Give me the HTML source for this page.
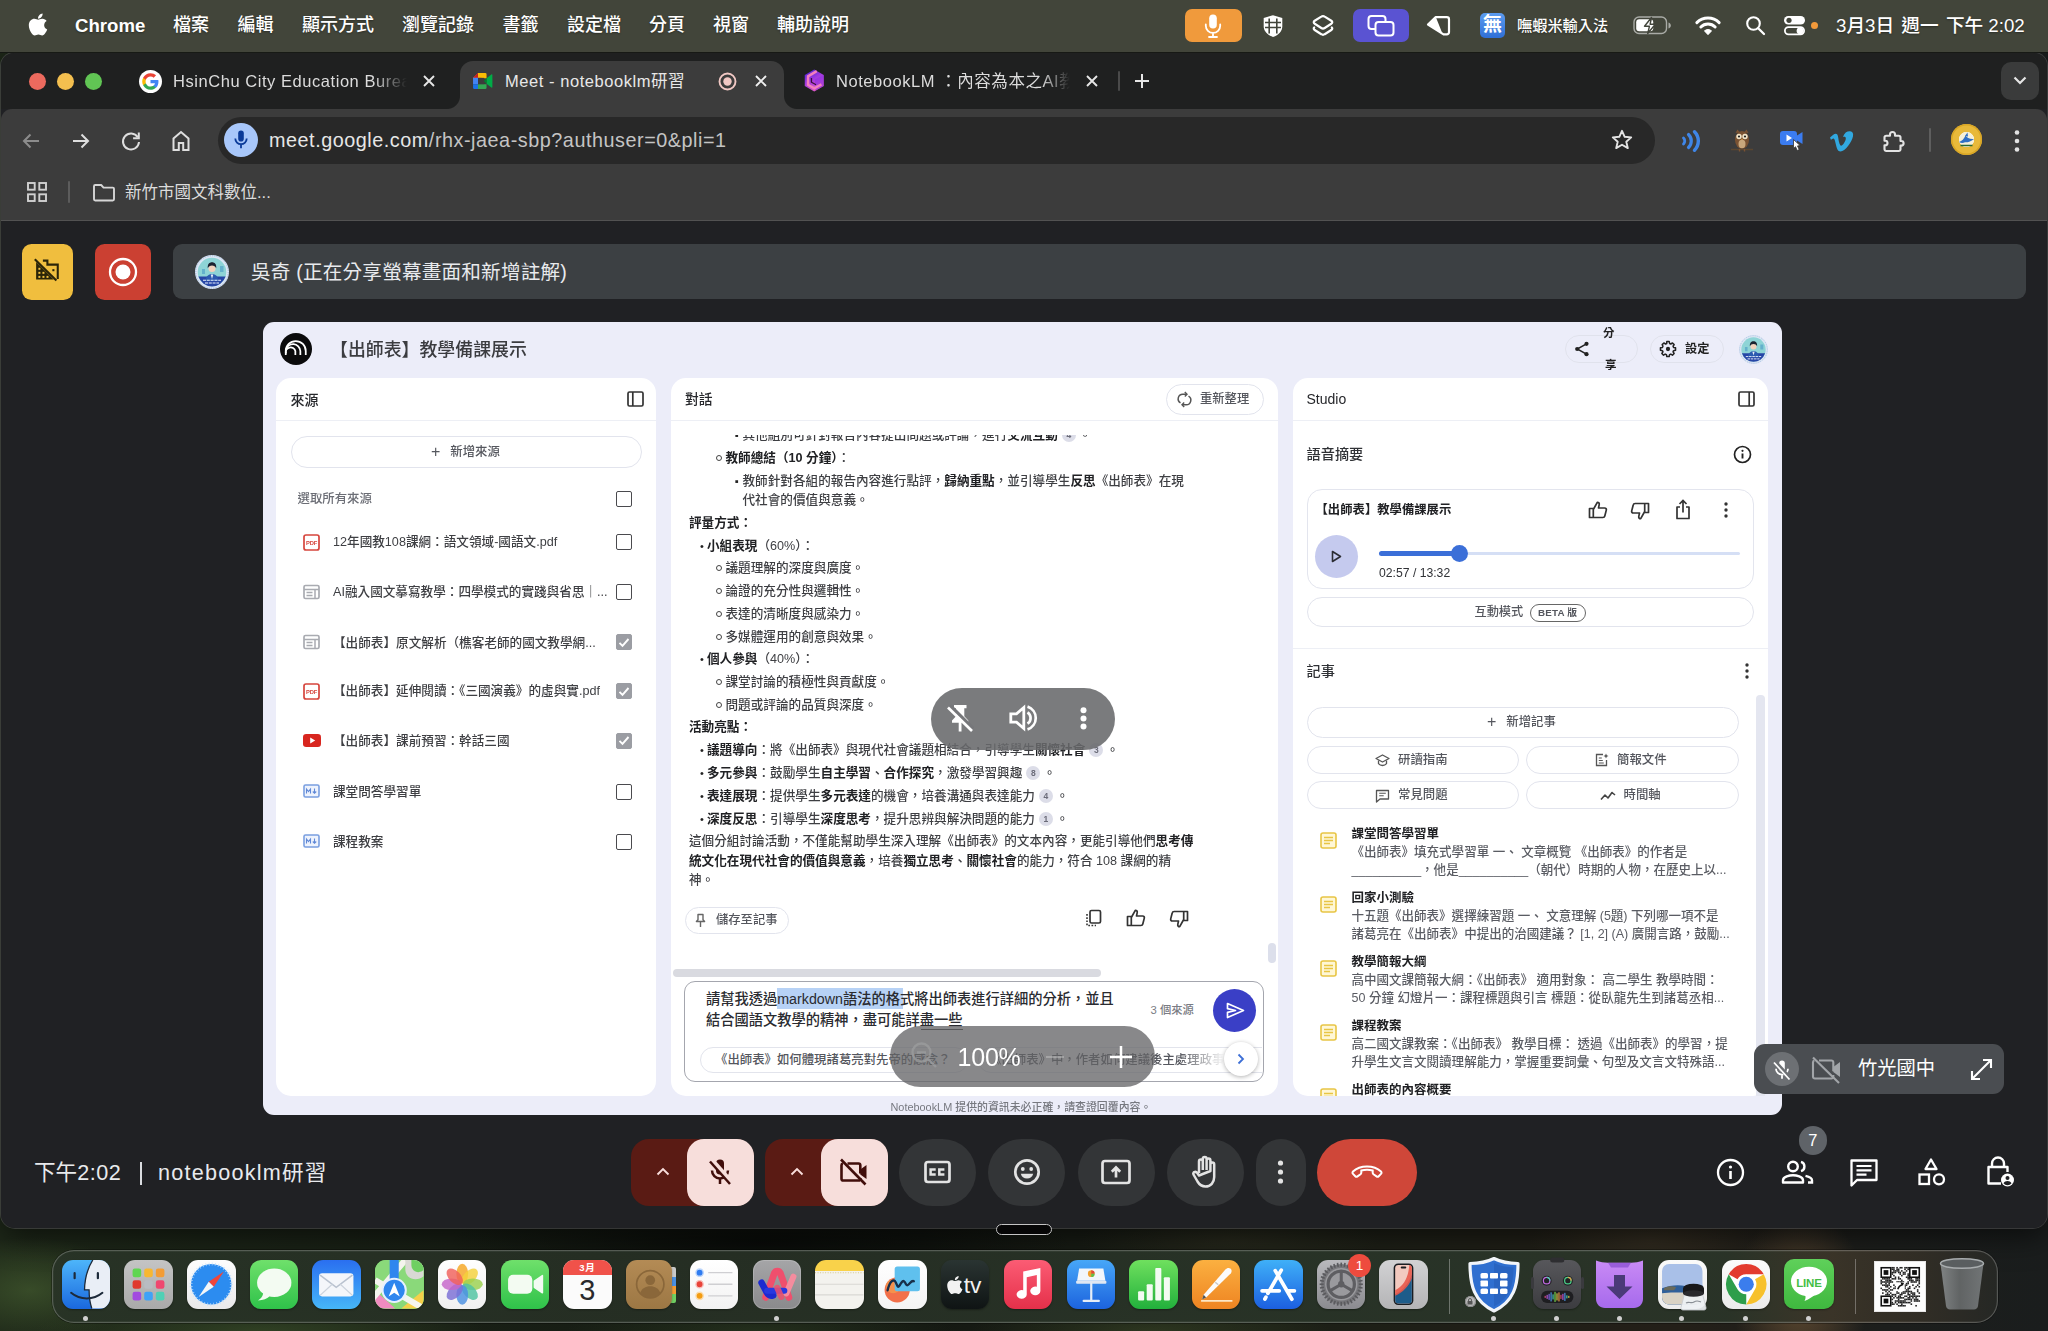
<!DOCTYPE html>
<html lang="zh-Hant">
<head>
<meta charset="utf-8">
<title>Meet - notebooklm研習</title>
<style>
*{box-sizing:border-box;margin:0;padding:0}
html,body{width:2048px;height:1331px;overflow:hidden;background:#1c2018}
body{position:relative;font-family:"Liberation Sans","Noto Sans CJK TC",sans-serif;color:#fff;-webkit-font-smoothing:antialiased}
.abs{position:absolute}
svg{display:block;overflow:visible}
/* wallpaper */
#wall{left:0;top:0;width:2048px;height:1331px;background:
 radial-gradient(ellipse 90px 120px at 1800px 1300px,rgba(110,84,54,.8),transparent 75%),
 radial-gradient(ellipse 160px 60px at 1650px 1240px,rgba(64,56,40,.5),transparent 75%),
 radial-gradient(ellipse 200px 40px at 1230px 1240px,rgba(54,52,36,.45),transparent 75%),
 radial-gradient(ellipse 140px 70px at 30px 1290px,rgba(62,84,44,.8),transparent 75%),
 radial-gradient(ellipse 300px 40px at 260px 1331px,rgba(56,76,40,.7),transparent 75%),
 radial-gradient(ellipse 260px 36px at 760px 1331px,rgba(44,60,34,.6),transparent 75%),
 radial-gradient(ellipse 240px 40px at 1150px 1331px,rgba(60,74,40,.55),transparent 75%),
 radial-gradient(ellipse 420px 50px at 760px 1242px,rgba(8,10,8,.9),transparent 75%),
 linear-gradient(90deg,#1e2819 0%,#181f15 22%,#141812 45%,#1b1f16 62%,#231f18 82%,#1c1e1c 92%,#1a1d1d 100%)}
/* menubar */
#menubar{left:0;top:0;width:2048px;height:51.500px;background:#42453a;z-index:5;box-shadow:0 1px 0 rgba(20,22,18,.9)}
#menubar .mi{position:absolute;top:0;height:52px;line-height:51.500px;font-size:18px;color:#fff;white-space:nowrap;font-weight:500;text-shadow:0 1px 2px rgba(0,0,0,.35)}
/* chrome window */
#win{left:1px;top:53px;width:2046px;height:1175px;border-radius:13px 13px 14px 14px;background:#202124;overflow:hidden;box-shadow:0 0 0 1px rgba(90,90,90,.55),0 8px 30px rgba(0,0,0,.6)}
#tabstrip{left:0;top:0;width:2046px;height:56px;background:#1f2020}
#toolbar{left:0;top:55.500px;width:2046px;height:112.500px;background:#3c3c3c;border-bottom:1px solid #525252;border-radius:11px 11px 0 0}
.tabtitle{position:absolute;top:16px;letter-spacing:.55px;font-size:16.5px;line-height:24px;color:#dcdcdc;white-space:nowrap;overflow:hidden}
#url{left:217px;top:63.500px;width:1437px;height:47.500px;border-radius:24px;background:#282828}
/* meet */
#meet{left:0;top:168px;width:2046px;height:1007px;background:#202124}

.av{border-radius:50%;background:radial-gradient(circle at 50% 38%,#2b3f66 0 14%,transparent 15%),radial-gradient(circle at 50% 62%,#3d78b8 0 22%,transparent 23%),radial-gradient(circle at 50% 50%,#9fdad6 0 48%,#5a8fd0 49% 60%,#dfe9f6 61% 100%);box-shadow:inset 0 -9px 0 -2px #2a4fa8}
/* notebooklm */
#nb{color:#303236;filter:blur(.35px)}
.panel{position:absolute;background:#fff;border-radius:15px}
.hr{position:absolute;height:1.300px;background:#edeff5}
.t{position:absolute;white-space:nowrap;font-size:12.620px;line-height:18px;color:#3e3f43;font-weight:500}
.t b{font-weight:700;color:#202124}
.pill{position:absolute;border:1.200px solid #e2e4ed;border-radius:99px;background:#fff}
.cb{position:absolute;width:16px;height:16px;border:1.600px solid #4a4a4e;border-radius:2px;background:#fff}
.cb.on{border-color:#9b9da3;background:#9b9da3}
.cit{display:inline-block;width:14px;height:14px;border-radius:50%;background:#dcdde8;color:#6a6b78;font-size:8.500px;line-height:14px;text-align:center;vertical-align:1px;margin:0 3px 0 4px;font-weight:700}

.bu{display:inline-block;width:7.500px;font-size:11px;vertical-align:0px;color:#222}
.dot{display:inline-block;width:7px;font-size:11px;color:#222}
.ci{display:inline-block;width:6px;height:6px;border:1.100px solid #444;border-radius:50%;margin:0 3.500px 1px 1px}

.nt{font-size:12.500px}
.nd{font-size:12.520px;color:#5a5c63}

.gb{top:1139px;height:66.500px;border-radius:33.500px;background:#333537}

.dk{overflow:hidden;box-shadow:0 1px 2px rgba(0,0,0,.35)}
</style>
</head>
<body>
<svg width="0" height="0" style="position:absolute"><defs>
<symbol id="avt" viewBox="-17 -17 34 34"><circle r="17" fill="#dde7f4"/><circle r="16.200" fill="none" stroke="#7f9fd0" stroke-width=".7" stroke-dasharray="1 1.300"/><circle r="14.300" fill="#8ed4d6"/><path d="M-13.600 4.500A14.300 14.300 0 0 0 13.600 4.500z" fill="#2746a6"/><path d="M-10 -3h3v5h-3zM8 -6h3.500v6H8z" fill="#5aa7c9" opacity=".8"/><path d="M-6.500 9c.5-5 3-7 6.500-7s6 2 6.500 7z" fill="#2c5bb0"/><path d="M-1.300 2.500h2.600L0 7z" fill="#e9eef6"/><circle cy="-3.600" r="3.500" fill="#f1d2bd"/><path d="M-4.200 -3.800c-.5-4 1.500-6 4.200-6s4.700 2 4.200 6c-1-1.800-2-2.600-4.200-2.600s-3.200.8-4.200 2.600z" fill="#1b2230"/><path d="M-9 8.300h18M-7 11h14" stroke="#e6eefc" stroke-width="1.100" stroke-dasharray="3 .8"/></symbol>
</defs></svg>
<div id="wall" class="abs"></div>

<!-- ================= MENU BAR ================= -->
<div id="menubar" class="abs">
 <svg class="abs" style="left:28px;top:12px" width="20" height="25" viewBox="0 0 384 512"><path fill="#fff" d="M318.7 268.7c-.2-36.7 16.4-64.4 50-84.8-18.8-26.9-47.2-41.7-84.7-44.6-35.5-2.8-74.3 20.7-88.5 20.7-15 0-49.4-19.7-76.4-19.7C63.3 141.2 4 184.8 4 273.5q0 39.3 14.4 81.2c12.8 36.7 59 126.7 107.2 125.2 25.2-.6 43-17.9 75.8-17.9 31.8 0 48.3 17.9 76.4 17.9 48.6-.7 90.4-82.5 102.6-119.3-65.2-30.7-61.7-90-61.7-91.9zm-56.6-164.2c27.3-32.4 24.8-61.9 24-72.5-24.1 1.4-52 16.4-67.9 34.9-17.5 19.8-27.8 44.3-25.6 71.9 26.1 2 49.9-11.4 69.5-34.3z"/></svg>
 <div class="mi" style="left:75px;font-weight:700;font-size:18.6px">Chrome</div>
 <div class="mi" style="left:173px">檔案</div>
 <div class="mi" style="left:237.5px">編輯</div>
 <div class="mi" style="left:302px">顯示方式</div>
 <div class="mi" style="left:402px">瀏覽記錄</div>
 <div class="mi" style="left:502.5px">書籤</div>
 <div class="mi" style="left:567px">設定檔</div>
 <div class="mi" style="left:649px">分頁</div>
 <div class="mi" style="left:713px">視窗</div>
 <div class="mi" style="left:777px">輔助說明</div>
 <!-- right status items -->
 <div class="abs" style="left:1185px;top:9px;width:57px;height:33px;border-radius:7px;background:#f09a3c"></div>
 <svg class="abs" style="left:1203px;top:13px" width="20" height="26" viewBox="0 0 20 26"><rect x="6.2" y="1.5" width="7.6" height="14" rx="3.8" fill="#fff"/><path d="M2.8 11.5v1.2a7.2 7.2 0 0 0 14.4 0v-1.2M10 20v4M6 24h8" fill="none" stroke="#fff" stroke-width="1.8" stroke-linecap="round"/></svg>
 <svg class="abs" style="left:1262px;top:14px" width="22" height="24" viewBox="0 0 22 24"><path d="M11 1.2 20.3 4v8.2c0 5-3.6 8.6-9.3 10.8C5.300 20.800 1.700 17.200 1.700 12.200V4z" fill="#fff"/><path d="M7.200 4.500v15M14.800 4.500v15M3 8.500h16M3 13.500h16" stroke="#42453b" stroke-width="1.600"/></svg>
 <svg class="abs" style="left:1311px;top:13px" width="24" height="26" viewBox="0 0 24 26"><path d="M10.300 3.600c1-.7 2.400-.7 3.400 0l6.600 4.200c1.300.8 1.300 2.200 0 3l-6.600 4.200c-1 .7-2.400.7-3.400 0L3.700 10.800c-1.300-.8-1.300-2.200 0-3z" fill="none" stroke="#fff" stroke-width="2.200" stroke-linejoin="round"/><path d="M3.200 14.500c-.8.800-.6 1.800.5 2.500l6.600 4.200c1 .7 2.400.7 3.400 0l6.600-4.200c1.100-.7 1.300-1.700.5-2.500" fill="none" stroke="#fff" stroke-width="2.200" stroke-linejoin="round" stroke-linecap="round"/></svg>
 <div class="abs" style="left:1352.500px;top:9px;width:56px;height:33px;border-radius:7px;background:#5a53d2"></div>
 <svg class="abs" style="left:1367px;top:14px" width="28" height="24" viewBox="0 0 28 24"><rect x="1.500" y="2" width="17" height="13" rx="3" fill="none" stroke="#fff" stroke-width="2"/><rect x="8.500" y="8" width="18" height="13.500" rx="3" fill="#5a53d2" stroke="#fff" stroke-width="2"/></svg>
 <svg class="abs" style="left:1426px;top:14px" width="25" height="24" viewBox="0 0 25 24"><path d="M2 10.500 9.500 3.200h11.300a2.200 2.200 0 0 1 2.200 2.200v12.800a2.200 2.200 0 0 1-2.200 2.200h-3.300z" fill="none" stroke="#fff" stroke-width="2.200" stroke-linejoin="round"/><path d="M2.500 10.500 10 3.500l6.500 16.300z" fill="#fff"/></svg>
 <div class="abs" style="left:1480px;top:13px;width:25px;height:25px;border-radius:5px;background:linear-gradient(#5b9bef,#2f6fd6);color:#fff;font-size:19px;line-height:24px;text-align:center;font-weight:700">無</div>
 <div class="mi" style="left:1517px;font-size:15.200px;font-weight:500;top:-.5px">嘸蝦米輸入法</div>
 <svg class="abs" style="left:1633px;top:16px" width="40" height="19" viewBox="0 0 40 19"><rect x="1" y="1" width="32.500" height="16.500" rx="5" fill="none" stroke="#fff" stroke-opacity=".55" stroke-width="1.400"/><rect x="3.200" y="3.200" width="17" height="12.100" rx="3" fill="#fff"/><path d="M35.500 6.500v6c1.600-.5 2.300-1.700 2.300-3s-.7-2.500-2.300-3z" fill="#fff" fill-opacity=".55"/><path d="M18.500 1.500 11.500 10.200h5l-1.800 7.300 7.600-9.200h-5.200z" fill="#fff" stroke="#42453b" stroke-width="1.400" stroke-linejoin="round"/></svg>
 <svg class="abs" style="left:1695px;top:15px" width="26" height="20.500" viewBox="0 0 28 22"><path d="M2 8.200a17 17 0 0 1 24 0" fill="none" stroke="#fff" stroke-width="3.200" stroke-linecap="round"/><path d="M6.300 12.800a10.800 10.800 0 0 1 15.400 0" fill="none" stroke="#fff" stroke-width="3.200" stroke-linecap="round"/><path d="M10.400 17.100a5 5 0 0 1 7.200 0L14 20.800z" fill="#fff" stroke="#fff" stroke-width="1.200" stroke-linejoin="round"/></svg>
 <svg class="abs" style="left:1745px;top:15px" width="21" height="21" viewBox="0 0 21 21"><circle cx="8.500" cy="8.500" r="6.300" fill="none" stroke="#fff" stroke-width="2.100"/><path d="M13.200 13.200 19 19" stroke="#fff" stroke-width="2.300" stroke-linecap="round"/></svg>
 <svg class="abs" style="left:1783px;top:15px" width="24" height="21" viewBox="0 0 24 21"><rect x="1" y="1" width="21" height="8.600" rx="4.300" fill="#fff"/><circle cx="6" cy="5.300" r="2.600" fill="#42453b"/><rect x="1.900" y="12.200" width="19.200" height="7.200" rx="3.600" fill="none" stroke="#fff" stroke-width="1.800"/><circle cx="17" cy="15.800" r="3.400" fill="#fff"/></svg>
 <div class="abs" style="left:1811px;top:22px;width:7px;height:7px;border-radius:50%;background:#f29a3a"></div>
 <div class="mi" style="left:1836px;font-size:18.700px;font-weight:500"><span style="word-spacing:2px">3月3日 週一 下午</span><span style="margin-left:5px">2:02</span></div>

</div>

<!-- ================= CHROME WINDOW ================= -->
<div id="win" class="abs">
 <div id="tabstrip" class="abs">
  <!-- traffic lights -->
  <div class="abs" style="left:28px;top:19.500px;width:17px;height:17px;border-radius:50%;background:#ec6a5e"></div>
  <div class="abs" style="left:56px;top:19.500px;width:17px;height:17px;border-radius:50%;background:#f4bf4f"></div>
  <div class="abs" style="left:84px;top:19.500px;width:17px;height:17px;border-radius:50%;background:#61c554"></div>
  <!-- tab 1 -->
  <svg class="abs" style="left:138px;top:17px" width="23" height="23" viewBox="0 0 48 48"><circle cx="24" cy="24" r="24" fill="#fff"/><path fill="#4285F4" d="M40.600 24.400c0-1.200-.1-2.300-.3-3.400H24v6.700h9.300c-.4 2.100-1.600 3.900-3.400 5.100v4.300h5.500c3.300-3 5.200-7.500 5.200-12.700z"/><path fill="#34A853" d="M24 41.300c4.700 0 8.600-1.500 11.400-4.200l-5.500-4.300c-1.500 1-3.500 1.700-5.900 1.700-4.500 0-8.300-3-9.700-7.100H8.600v4.400c2.800 5.600 8.600 9.500 15.400 9.500z"/><path fill="#FBBC05" d="M14.300 27.400c-.4-1-.5-2.200-.5-3.400s.2-2.300.5-3.400v-4.400H8.600C7.400 18.500 6.700 21.200 6.700 24s.7 5.500 1.900 7.800l5.700-4.400z"/><path fill="#EA4335" d="M24 13.500c2.600 0 4.900.9 6.700 2.600l4.900-4.900C32.600 8.400 28.700 6.700 24 6.700c-6.800 0-12.600 3.900-15.400 9.500l5.700 4.400c1.400-4.100 5.200-7.100 9.700-7.100z"/></svg>
  <div class="tabtitle" style="left:172px;width:236px;-webkit-mask-image:linear-gradient(90deg,#000 200px,transparent 234px);mask-image:linear-gradient(90deg,#000 200px,transparent 234px)">HsinChu City Education Bureau</div>
  <svg class="abs" style="left:421px;top:21px" width="14" height="14" viewBox="0 0 14 14"><path d="M2 2l10 10M12 2 2 12" stroke="#e6e6e6" stroke-width="1.900"/></svg>
  <!-- active tab -->
  <div class="abs" style="left:459px;top:8px;width:324px;height:48px;background:#3c3c3c;border-radius:13px 13px 0 0"></div>
  <div class="abs" style="left:446px;top:43px;width:13px;height:13px;background:radial-gradient(circle at 0 0,transparent 12.500px,#3c3c3c 13.500px)"></div>
  <div class="abs" style="left:783px;top:43px;width:13px;height:13px;background:radial-gradient(circle at 100% 0,transparent 12.500px,#3c3c3c 13.500px)"></div>
  <svg class="abs" style="left:471px;top:18.500px" width="21" height="18" viewBox="0 0 23 20"><path d="M1 6.500 6.500 1H13v6H6.500v6H1z" fill="#ea4335"/><path d="M1 6.500 6.500 1v5.500z" fill="#c5221f"/><path d="M6.500 1H14.500a1.500 1.500 0 0 1 1.500 1.500V7H10.500V6.500H6.500z" fill="#fbbc04"/><path d="M1 6.500H6.500v7H1z" fill="#4285f4"/><path d="M1 13.500h5.500V19H2.500A1.500 1.500 0 0 1 1 17.500z" fill="#1a73e8"/><path d="M6.500 13.500H16v4a1.500 1.500 0 0 1-1.500 1.500h-8z" fill="#34a853"/><path d="M16 7l5.300-4.300c.5-.4 1.200 0 1.200.6v13.400c0 .6-.7 1-1.200.6L16 13z" fill="#00ac47"/><path d="M16 7v6l-3-3z" fill="#00832d"/><rect x="6.500" y="6.500" width="6.800" height="7" fill="#3c3c3c"/></svg>
  <div class="tabtitle" style="left:504px;width:200px;color:#e8e8e8">Meet - notebooklm研習</div>
  <svg class="abs" style="left:717px;top:18.500px" width="19" height="19" viewBox="0 0 19 19"><circle cx="9.500" cy="9.500" r="8" fill="none" stroke="#f1c8c4" stroke-width="1.900"/><circle cx="9.500" cy="9.500" r="4.200" fill="#f1c8c4"/></svg>
  <svg class="abs" style="left:753px;top:21px" width="14" height="14" viewBox="0 0 14 14"><path d="M2 2l10 10M12 2 2 12" stroke="#f0f0f0" stroke-width="1.900"/></svg>
  <!-- tab 3 -->
  <svg class="abs" style="left:802.500px;top:16px" width="20.500" height="23" viewBox="0 0 20 23"><defs><linearGradient id="nbg" x1=".2" y1="0" x2=".7" y2="1"><stop offset="0" stop-color="#4a22d6"/><stop offset=".45" stop-color="#a23adf"/><stop offset="1" stop-color="#e85ec0"/></linearGradient></defs><path d="M10 .5 19.500 6v11L10 22.500.500 17V6z" fill="url(#nbg)"/><path d="M10.500 10.500 19.500 6v11l-8 4.500z" fill="#8a2ee6" opacity=".55"/><path d="M12.500 2.200 3.800 7.300v8.500L10 19.400l7.200-4.100" fill="none" stroke="#f27fbd" stroke-width="2.500"/><path d="M7.200 9v4.200l4.600 2.600" fill="none" stroke="#3a0f3a" stroke-width="1.300"/></svg>
  <div class="tabtitle" style="left:835px;width:236px;-webkit-mask-image:linear-gradient(90deg,#000 205px,transparent 234px);mask-image:linear-gradient(90deg,#000 205px,transparent 234px)">NotebookLM ：內容為本之AI教學</div>
  <svg class="abs" style="left:1084px;top:21px" width="14" height="14" viewBox="0 0 14 14"><path d="M2 2l10 10M12 2 2 12" stroke="#e6e6e6" stroke-width="1.900"/></svg>
  <div class="abs" style="left:1117px;top:18px;width:2px;height:20px;background:#4a4a4a;border-radius:1px"></div>
  <svg class="abs" style="left:1133px;top:20px" width="16" height="16" viewBox="0 0 16 16"><path d="M8 1v14M1 8h14" stroke="#e6e6e6" stroke-width="2"/></svg>
  <!-- tab search dropdown -->
  <div class="abs" style="left:2000px;top:9px;width:38px;height:38px;border-radius:10px;background:#3a3b3b"></div>
  <svg class="abs" style="left:2012px;top:23px" width="14" height="9" viewBox="0 0 14 9"><path d="M1.500 1.500 7 7l5.500-5.500" fill="none" stroke="#e6e6e6" stroke-width="2.200"/></svg>

 </div>
 <div id="toolbar" class="abs"></div>
 <!-- nav buttons -->
 <svg class="abs" style="left:20px;top:78px" width="20" height="20" viewBox="0 0 20 20"><path d="M18 10H3M9.500 3.500 3 10l6.500 6.500" fill="none" stroke="#8c8c8c" stroke-width="2"/></svg>
 <svg class="abs" style="left:70px;top:78px" width="20" height="20" viewBox="0 0 20 20"><path d="M2 10h15M10.500 3.500 17 10l-6.500 6.500" fill="none" stroke="#dedede" stroke-width="2"/></svg>
 <svg class="abs" style="left:119px;top:77px" width="22" height="22" viewBox="0 0 22 22"><path d="M17.800 7.200A8 8 0 1 0 19 12" fill="none" stroke="#dedede" stroke-width="2"/><path d="M18.800 2.500v5.700h-5.700" fill="none" stroke="#dedede" stroke-width="2"/></svg>
 <svg class="abs" style="left:169px;top:76px" width="22" height="23" viewBox="0 0 22 23"><path d="M3.500 21V9.500L11 3l7.500 6.500V21h-5.300v-7H8.800v7z" fill="none" stroke="#dedede" stroke-width="2" stroke-linejoin="miter"/></svg>
 <div id="url" class="abs"></div>
 <div class="abs" style="left:223px;top:70px;width:34px;height:34px;border-radius:50%;background:#a8c7fa"></div>
 <svg class="abs" style="left:232px;top:76px" width="16" height="22" viewBox="0 0 16 22"><rect x="5.200" y="1.500" width="5.600" height="11" rx="2.800" fill="#0a3a99"/><path d="M2.300 9.500a5.700 5.700 0 0 0 11.400 0M8 15.200v4" fill="none" stroke="#0a3a99" stroke-width="1.800"/></svg>
 <div class="abs" style="left:268px;top:73px;font-size:19.800px;line-height:28px;color:#e6e6e6;white-space:nowrap;letter-spacing:.54px">meet.google.com<span style="color:#c4c4c4">/rhx-jaea-sbp?authuser=0&amp;pli=1</span></div>
 <svg class="abs" style="left:1609px;top:75px" width="24" height="24" viewBox="0 0 24 24"><path d="M12 2.800l2.700 6 6.500.6-4.900 4.300 1.500 6.400L12 16.700l-5.800 3.400 1.500-6.400-4.900-4.300 6.500-.6z" fill="none" stroke="#e3e3e3" stroke-width="1.900" stroke-linejoin="round"/></svg>
 <!-- extensions -->
 <svg class="abs" style="left:1680px;top:76.500px" width="22" height="22" viewBox="0 0 22 22"><path d="M2.500 8a4.200 4.200 0 0 1 0 6" fill="none" stroke="#3f86e8" stroke-width="2.800" stroke-linecap="round"/><path d="M7.500 4.500a9 9 0 0 1 0 13" fill="none" stroke="#3f86e8" stroke-width="3.200" stroke-linecap="round"/><path d="M13.500 1.800a13 13 0 0 1 0 18.400" fill="none" stroke="#3f86e8" stroke-width="3.400" stroke-linecap="round"/></svg>
 <svg class="abs" style="left:1729px;top:75px" width="24" height="26" viewBox="0 0 24 26"><ellipse cx="12" cy="12" rx="7" ry="9" fill="#7a5232"/><path d="M5.500 5 7.500 1.500 10 4.500M18.500 5 16.500 1.500 14 4.500" fill="#7a5232"/><circle cx="9" cy="8.500" r="2.700" fill="#f1e4c8"/><circle cx="15" cy="8.500" r="2.700" fill="#f1e4c8"/><circle cx="9" cy="8.500" r="1.100" fill="#222"/><circle cx="15" cy="8.500" r="1.100" fill="#222"/><path d="M12 10.500l-1.200 2h2.400z" fill="#e8a33a"/><ellipse cx="12" cy="16" rx="3.500" ry="4.200" fill="#c9a77c"/><path d="M1 21.500h22" stroke="#5a4630" stroke-width="1.600"/><path d="M9.500 21v2.500M14.500 21v2.500" stroke="#7a5232" stroke-width="1.400"/></svg>
 <svg class="abs" style="left:1778px;top:77px" width="28" height="24" viewBox="0 0 28 24"><rect x="1" y="1" width="17" height="14" rx="3" fill="#3b7cf0"/><path d="M18 5.500 23.500 2v12L18 10.500z" fill="#3b7cf0"/><path d="M7.500 4.500v7l5.500-3.500z" fill="#fff"/><path d="M14.500 9.500v9l2-1.800 1.700 3.800 2-.9-1.700-3.700 2.700-.3z" fill="#fff" stroke="#333" stroke-width=".8"/></svg>
 <svg class="abs" style="left:1828px;top:78px" width="25" height="21" viewBox="0 0 25 21"><path d="M1 6.500c2-1.700 4-3.800 5.800-3.800 2.600 0 2.400 5 3.300 8.500.6 2.200 1.200 3.500 2 3.500 1.500 0 4.500-4.500 4.700-7 .2-2-1.300-2.300-2.900-1.700 1.500-4.300 4.400-6 7.300-5.700 2.400.3 3.300 2.200 2.800 5C23 11 16 20.500 11.500 20.500c-2.900 0-3.800-3.500-5-8.500-.7-2.800-1-4.500-2.200-4.500-.6 0-1.700.8-2.400 1.300z" fill="#31a8e0"/></svg>
 <svg class="abs" style="left:1880px;top:76px" width="24" height="24" viewBox="0 0 24 24"><path d="M3.500 8.500a1.800 1.800 0 0 1 1.800-1.800H9V5.500a2.500 2.500 0 0 1 5 0v1.200h3.700a1.800 1.800 0 0 1 1.800 1.800V12h.8a2.300 2.300 0 0 1 0 4.600h-.8v3.600a1.800 1.800 0 0 1-1.800 1.800H5.300a1.800 1.800 0 0 1-1.800-1.800v-3.900h.7a2.300 2.300 0 0 0 0-4.600h-.7z" fill="none" stroke="#e3e3e3" stroke-width="2.100" stroke-linejoin="round"/></svg>
 <div class="abs" style="left:1928px;top:75px;width:2px;height:24px;background:#5e5e5e;border-radius:1px"></div>
 <div class="abs" style="left:1950px;top:71px;width:31px;height:31px;border-radius:50%;background:radial-gradient(circle at 50% 50%,#f6f0d8 0 34%,#e8b93a 36% 100%);box-shadow:inset 0 0 0 1.500px #d9a625"></div>
 <svg class="abs" style="left:1955px;top:77px" width="21" height="19" viewBox="0 0 21 19"><path d="M3 12c3-1 5-3 6.500-6.500C11 8 14 9.500 18 9c-3 2.500-6 3.500-9 3.300C7 13.500 5 13.200 3 12z" fill="#2f6fc4"/><path d="M9 6l2.500-3.500L12 6.500z" fill="#2f6fc4"/><path d="M4.500 15.500h12" stroke="#2a6a34" stroke-width="1.600"/></svg>
 <svg class="abs" style="left:2013px;top:76px" width="6" height="24" viewBox="0 0 6 24"><circle cx="3" cy="3.500" r="2.300" fill="#e3e3e3"/><circle cx="3" cy="12" r="2.300" fill="#e3e3e3"/><circle cx="3" cy="20.500" r="2.300" fill="#e3e3e3"/></svg>
 <!-- bookmarks bar -->
 <svg class="abs" style="left:25px;top:128px" width="22" height="22" viewBox="0 0 22 22"><g fill="none" stroke="#d0d0d0" stroke-width="1.900"><rect x="2" y="2" width="6.700" height="6.700"/><rect x="13.300" y="2" width="6.700" height="6.700"/><rect x="2" y="13.300" width="6.700" height="6.700"/><rect x="13.300" y="13.300" width="6.700" height="6.700"/></g></svg>
 <div class="abs" style="left:66.500px;top:128px;width:2px;height:22px;background:#5c5c5c;border-radius:1px"></div>
 <svg class="abs" style="left:91px;top:130px" width="24" height="19" viewBox="0 0 24 19"><path d="M2 3.200c0-.7.500-1.200 1.200-1.200h6l2.300 2.600h9.300c.7 0 1.200.5 1.200 1.200v10.500c0 .7-.5 1.200-1.200 1.200H3.200c-.7 0-1.200-.5-1.200-1.200z" fill="none" stroke="#d6d6d6" stroke-width="1.900" stroke-linejoin="round"/></svg>
 <div class="abs" style="left:124px;top:126px;font-size:16.500px;line-height:26px;color:#dcdcdc;white-space:nowrap">新竹市國文科數位...</div>

 <div id="meet" class="abs">
<div id="pg" class="abs" style="left:-1px;top:-221px;width:2048px;height:1331px">
 <!-- top row -->
 <div class="abs" style="left:22px;top:243.500px;width:51px;height:56px;border-radius:9.500px;background:#f0be3e"></div>
 <svg class="abs" style="left:21.200px;top:243.500px" width="51" height="56" viewBox="0 0 51 56"><g transform="translate(25.500 26.500) scale(.9) translate(-25.500 -26.500)"><path d="M14 17v19.500h19.500z" fill="#2b2408"/><path d="M21.500 15.500h5v4.500h11.500v16" fill="none" stroke="#2b2408" stroke-width="2.300"/><g fill="#f0be3e"><rect x="16.500" y="23.500" width="2.200" height="2.200"/><rect x="16.500" y="28" width="2.200" height="2.200"/><rect x="16.500" y="32.500" width="2.200" height="2.200"/><rect x="21" y="28" width="2.200" height="2.200"/><rect x="21" y="32.500" width="2.200" height="2.200"/><rect x="25.500" y="32.500" width="2.200" height="2.200"/></g><rect x="32" y="25" width="2.300" height="2.300" fill="#2b2408"/><path d="M12.500 14 36.500 37.500" stroke="#2b2408" stroke-width="2.300"/></g></svg>
 <div class="abs" style="left:95px;top:243.500px;width:55.500px;height:56px;border-radius:9.500px;background:#cb4032"></div>
 <svg class="abs" style="left:107.500px;top:256.500px" width="30" height="30" viewBox="0 0 30 30"><circle cx="15" cy="15" r="13" fill="none" stroke="#fff" stroke-width="2.300"/><circle cx="15" cy="15" r="7.500" fill="#fff"/></svg>
 <div class="abs" style="left:173px;top:244px;width:1853px;height:55px;border-radius:9px;background:#3c4043"></div>
 <svg class="abs" style="left:194.500px;top:254.500px" width="34" height="34"><use href="#avt"/></svg>
 <div class="abs" style="left:251px;top:257.500px;font-size:19.600px;line-height:28px;color:#e8eaed;white-space:nowrap;letter-spacing:.2px">吳奇 (正在分享螢幕畫面和新增註解)</div>

 <!-- shared screen -->
 <div id="ss" class="abs" style="left:263px;top:322px;width:1519px;height:793px;border-radius:11px;background:#ecedf9;overflow:hidden">
  <div id="nb" class="abs" style="left:-263px;top:-322px;width:2048px;height:1331px">
   <!-- header -->
   <div class="abs" style="left:279.500px;top:333px;width:32px;height:32px;border-radius:50%;background:#0b0b0c"></div>
   <svg class="abs" style="left:284px;top:339px" width="23" height="18" viewBox="0 0 23 18"><g fill="none" stroke="#fff" stroke-width="1.750"><path d="M1.750 16v-4a10 10 0 0 1 20 0v4"/><path d="M1.900 11a7.300 7.300 0 0 1 14.450 1v4"/><path d="M2 14.500a4.800 4.800 0 0 1 9.350-2.500v4"/></g></svg>
   <div class="t" style="left:330px;top:337.500px;font-size:17.900px;line-height:24px;color:#3b3c40">【出師表】教學備課展示</div>
   <div class="pill" style="left:1565px;top:335px;width:73px;height:28px;background:transparent;border-color:#e0e2ec"></div>
   <svg class="abs" style="left:1574px;top:341px" width="16" height="16" viewBox="0 0 16 16"><circle cx="12.500" cy="2.800" r="2.100" fill="#222"/><circle cx="3.200" cy="8" r="2.100" fill="#222"/><circle cx="12.500" cy="13.200" r="2.100" fill="#222"/><path d="M12.500 2.800 3.200 8l9.300 5.200" fill="none" stroke="#222" stroke-width="1.500"/></svg>
   <div class="t" style="left:1603px;top:324px;font-size:11.500px;color:#222;font-weight:700">分</div>
   <div class="t" style="left:1605px;top:356px;font-size:11.500px;color:#222;font-weight:700">享</div>
   <div class="pill" style="left:1650px;top:335px;width:74px;height:28px;background:transparent;border-color:#e0e2ec"></div>
   <svg class="abs" style="left:1660px;top:341px" width="16" height="16" viewBox="0 0 24 24"><path fill="none" stroke="#222" stroke-width="2.300" stroke-linejoin="round" d="M10.200 2.500h3.600l.6 2.900 1.800.8 2.500-1.600 2.500 2.500-1.600 2.500.8 1.800 2.900.6v3.600l-2.900.6-.8 1.800 1.600 2.500-2.500 2.500-2.500-1.600-1.800.8-.6 2.900h-3.600l-.6-2.900-1.800-.8-2.500 1.600-2.500-2.500 1.600-2.500-.8-1.800-2.900-.6v-3.600l2.900-.6.8-1.800L3.300 7.100l2.500-2.500 2.500 1.600 1.800-.8z" transform="translate(0,-1.700)"/><circle cx="12" cy="12" r="3.200" fill="#222"/></svg>
   <div class="t" style="left:1685px;top:340px;font-size:12.200px;color:#222;font-weight:700">設定</div>
   <svg class="abs" style="left:1738.500px;top:334.500px" width="29" height="29"><use href="#avt"/></svg>

   <!-- ===== sources panel ===== -->
   <div class="panel" style="left:276px;top:378px;width:380px;height:718px"></div>
   <div class="hr" style="left:276px;top:420px;width:380px"></div>
   <div class="t" style="left:290.500px;top:390.500px;font-size:14px;color:#26272b">來源</div>
   <svg class="abs" style="left:626.500px;top:391px" width="17" height="16" viewBox="0 0 17 16"><rect x="1" y="1" width="15" height="14" rx="1.500" fill="none" stroke="#333" stroke-width="1.700"/><path d="M5.800 1v14" stroke="#333" stroke-width="1.700"/></svg>
   <div class="pill" style="left:290.500px;top:436px;width:351.500px;height:31.500px"></div>
   <div class="t" style="left:431px;top:442.500px;font-size:12.400px;color:#55575e"><span style="font-size:16px;vertical-align:-1.500px;margin-right:10px;font-weight:400">+</span>新增來源</div>
   <div class="t" style="left:297.500px;top:490px;font-size:12.400px;color:#6b6d75">選取所有來源</div>
   <div class="cb" style="left:616px;top:491px"></div>

   <!-- rows -->
   <svg class="abs" style="left:303px;top:533.500px" width="17" height="17" viewBox="0 0 17 17"><rect x="1" y="1" width="15" height="15" rx="2" fill="#fff" stroke="#d6453d" stroke-width="1.700"/><text x="8.500" y="10.800" text-anchor="middle" font-family="Liberation Sans,sans-serif" font-weight="700" font-size="5.800" fill="#d6453d" letter-spacing="-.2">PDF</text></svg>
   <div class="t" style="left:333px;top:533px">12年國教108課綱：語文領域-國語文.pdf</div>
   <div class="cb" style="left:616px;top:534px"></div>

   <svg class="abs" style="left:303px;top:583.500px" width="17" height="16" viewBox="0 0 17 16"><rect x="1" y="1.500" width="15" height="13" rx="1.500" fill="none" stroke="#a9abb1" stroke-width="1.700"/><path d="M1 5.500h15M3.500 8.500h6M3.500 11.500h6M12 5.500v9" stroke="#a9abb1" stroke-width="1.500"/></svg>
   <div class="t" style="left:333px;top:583px">AI融入國文摹寫教學：四學模式的實踐與省思｜...</div>
   <div class="cb" style="left:616px;top:584px"></div>

   <svg class="abs" style="left:303px;top:634px" width="17" height="16" viewBox="0 0 17 16"><rect x="1" y="1.500" width="15" height="13" rx="1.500" fill="none" stroke="#a9abb1" stroke-width="1.700"/><path d="M1 5.500h15M3.500 8.500h6M3.500 11.500h6M12 5.500v9" stroke="#a9abb1" stroke-width="1.500"/></svg>
   <div class="t" style="left:333px;top:633.500px">【出師表】原文解析（樵客老師的國文教學網...</div>
   <div class="cb on" style="left:616px;top:634px"></div>
   <svg class="abs" style="left:618px;top:636.500px" width="12" height="11" viewBox="0 0 12 11"><path d="M1.500 5.800 4.500 8.800 10.500 2" fill="none" stroke="#fff" stroke-width="1.900"/></svg>

   <svg class="abs" style="left:303px;top:682.500px" width="17" height="17" viewBox="0 0 17 17"><rect x="1" y="1" width="15" height="15" rx="2" fill="#fff" stroke="#d6453d" stroke-width="1.700"/><text x="8.500" y="10.800" text-anchor="middle" font-family="Liberation Sans,sans-serif" font-weight="700" font-size="5.800" fill="#d6453d" letter-spacing="-.2">PDF</text></svg>
   <div class="t" style="left:333px;top:682px">【出師表】延伸閱讀：《三國演義》的虛與實.pdf</div>
   <div class="cb on" style="left:616px;top:683px"></div>
   <svg class="abs" style="left:618px;top:685.500px" width="12" height="11" viewBox="0 0 12 11"><path d="M1.500 5.800 4.500 8.800 10.500 2" fill="none" stroke="#fff" stroke-width="1.900"/></svg>

   <svg class="abs" style="left:302.500px;top:734px" width="18" height="13" viewBox="0 0 18 13"><rect x="0" y="0" width="18" height="13" rx="3.200" fill="#d8261f"/><path d="M7.200 3.500v6l5-3z" fill="#fff"/></svg>
   <div class="t" style="left:333px;top:731.500px">【出師表】課前預習：幹話三國</div>
   <div class="cb on" style="left:616px;top:732.500px"></div>
   <svg class="abs" style="left:618px;top:735px" width="12" height="11" viewBox="0 0 12 11"><path d="M1.500 5.800 4.500 8.800 10.500 2" fill="none" stroke="#fff" stroke-width="1.900"/></svg>

   <svg class="abs" style="left:303px;top:784px" width="17" height="14" viewBox="0 0 17 14"><rect x="1" y="1" width="15" height="12" rx="1.500" fill="#eef3fd" stroke="#7a9fe0" stroke-width="1.600"/><path d="M3.500 9.500V5l2 2.500 2-2.500v4.500M11.500 4.500v4.500M9.800 7.500l1.700 1.800 1.700-1.800" fill="none" stroke="#5f88d6" stroke-width="1.100"/></svg>
   <div class="t" style="left:333px;top:782.500px">課堂問答學習單</div>
   <div class="cb" style="left:616px;top:783.500px"></div>

   <svg class="abs" style="left:303px;top:834px" width="17" height="14" viewBox="0 0 17 14"><rect x="1" y="1" width="15" height="12" rx="1.500" fill="#eef3fd" stroke="#7a9fe0" stroke-width="1.600"/><path d="M3.500 9.500V5l2 2.500 2-2.500v4.500M11.500 4.500v4.500M9.800 7.500l1.700 1.800 1.700-1.800" fill="none" stroke="#5f88d6" stroke-width="1.100"/></svg>
   <div class="t" style="left:333px;top:832.500px">課程教案</div>
   <div class="cb" style="left:616px;top:833.500px"></div>
   <!-- ===== chat panel ===== -->
   <div class="panel" style="left:671px;top:378px;width:607px;height:718px"></div>
   <div class="hr" style="left:671px;top:420px;width:607px"></div>
   <div class="t" style="left:685px;top:390.700px;font-size:13.800px;color:#26272b">對話</div>
   <div class="pill" style="left:1166px;top:384px;width:98px;height:30.500px"></div>
   <svg class="abs" style="left:1176.500px;top:391.500px" width="15" height="15" viewBox="0 0 15 15"><path d="M9.500 2.200H5.800a4.600 4.600 0 0 0-2.300 8.600M5.500 12.800h3.700a4.600 4.600 0 0 0 2.300-8.600" fill="none" stroke="#555" stroke-width="1.500"/><path d="M7.800 0 10 2.200 7.800 4.400M7.200 10.600 5 12.800l2.200 2.200" fill="none" stroke="#555" stroke-width="1.400"/></svg>
   <div class="t" style="left:1200px;top:390px;font-size:12.300px;color:#55575e">重新整理</div>

   <div class="abs" style="left:671px;top:434.500px;width:595px;height:18px;overflow:hidden">
    <div class="t" style="left:64px;top:-8.500px"><span class="bu">▪</span>其他組別可針對報告內容提出問題或評論，進行<b>交流互動</b><span class="cit">4</span>。</div>
   </div>
   <div class="t" style="left:715px;top:449px"><span class="ci"></span><b>教師總結（10 分鐘）</b>：</div>
   <div class="t" style="left:735px;top:472px"><span class="bu">▪</span>教師針對各組的報告內容進行點評，<b>歸納重點</b>，並引導學生<b>反思</b>《出師表》在現</div>
   <div class="t" style="left:742.500px;top:490.500px">代社會的價值與意義。</div>
   <div class="t" style="left:689px;top:514px"><b>評量方式：</b></div>
   <div class="t" style="left:700px;top:536.500px"><span class="dot">•</span><b>小組表現</b>（60%）：</div>
   <div class="t" style="left:715px;top:559px"><span class="ci"></span>議題理解的深度與廣度。</div>
   <div class="t" style="left:715px;top:582px"><span class="ci"></span>論證的充分性與邏輯性。</div>
   <div class="t" style="left:715px;top:604.500px"><span class="ci"></span>表達的清晰度與感染力。</div>
   <div class="t" style="left:715px;top:627.500px"><span class="ci"></span>多媒體運用的創意與效果。</div>
   <div class="t" style="left:700px;top:650px"><span class="dot">•</span><b>個人參與</b>（40%）：</div>
   <div class="t" style="left:715px;top:672.500px"><span class="ci"></span>課堂討論的積極性與貢獻度。</div>
   <div class="t" style="left:715px;top:696px"><span class="ci"></span>問題或評論的品質與深度。</div>
   <div class="t" style="left:689px;top:718px"><b>活動亮點：</b></div>
   <div class="t" style="left:700px;top:741px"><span class="dot">•</span><b>議題導向</b>：將《出師表》與現代社會議題相結合，引導學生<b>關懷社會</b><span class="cit">3</span>。</div>
   <div class="t" style="left:700px;top:764px"><span class="dot">•</span><b>多元參與</b>：鼓勵學生<b>自主學習</b>、<b>合作探究</b>，激發學習興趣<span class="cit">8</span>。</div>
   <div class="t" style="left:700px;top:787px"><span class="dot">•</span><b>表達展現</b>：提供學生<b>多元表達</b>的機會，培養溝通與表達能力<span class="cit">4</span>。</div>
   <div class="t" style="left:700px;top:810px"><span class="dot">•</span><b>深度反思</b>：引導學生<b>深度思考</b>，提升思辨與解決問題的能力<span class="cit">1</span>。</div>
   <div class="t" style="left:689px;top:832px">這個分組討論活動，不僅能幫助學生深入理解《出師表》的文本內容，更能引導他們<b>思考傳</b></div>
   <div class="t" style="left:689px;top:851.500px"><b>統文化在現代社會的價值與意義</b>，培養<b>獨立思考</b>、<b>關懷社會</b>的能力，符合 108 課綱的精</div>
   <div class="t" style="left:689px;top:870.500px">神。</div>

   <div class="pill" style="left:685px;top:906.500px;width:104px;height:27px"></div>
   <svg class="abs" style="left:694.500px;top:912.500px" width="11" height="15" viewBox="0 0 11 15"><path d="M3 1.500h5v5.200l1.600 1.800H1.400L3 6.700z" fill="none" stroke="#666" stroke-width="1.400" stroke-linejoin="round"/><path d="M5.500 8.700V14" stroke="#666" stroke-width="1.400"/></svg>
   <div class="t" style="left:716px;top:911px;font-size:12.300px;color:#55575e">儲存至記事</div>
   <svg class="abs" style="left:1085px;top:909px" width="17" height="19" viewBox="0 0 17 19"><rect x="5" y="1.500" width="10.500" height="12.500" rx="1.500" fill="none" stroke="#333" stroke-width="1.700"/><path d="M2 5v11.500h9" fill="none" stroke="#333" stroke-width="1.600" stroke-dasharray="1.700 1.500"/></svg>
   <svg class="abs thumb" style="left:1126px;top:908px" width="20" height="20" viewBox="0 0 20 20"><path d="M1.500 8.500h3.800v9H1.500z M5.300 9.500 9.300 2.300c1.300-.1 2.200.9 1.900 2.300L10.500 8h6.200c1.100 0 1.900 1 1.600 2.100l-1.500 5.900c-.2.900-1 1.500-1.900 1.500H5.300" fill="none" stroke="#333" stroke-width="1.700" stroke-linejoin="round"/></svg>
   <svg class="abs thumb" style="left:1168.500px;top:909px" width="20" height="20" viewBox="0 0 20 20"><g transform="rotate(180 10 10)"><path d="M1.500 8.500h3.800v9H1.500z M5.300 9.500 9.300 2.300c1.300-.1 2.200.9 1.900 2.300L10.500 8h6.200c1.100 0 1.900 1 1.600 2.100l-1.500 5.900c-.2.900-1 1.500-1.900 1.500H5.300" fill="none" stroke="#333" stroke-width="1.700" stroke-linejoin="round"/></g></svg>
   <div class="abs" style="left:1267.500px;top:943px;width:8px;height:19.500px;border-radius:4px;background:#dcdfeb"></div>
   <div class="abs" style="left:673px;top:969px;width:428px;height:8px;border-radius:4px;background:#d9dae0"></div>

   <!-- input -->
   <div class="abs" style="left:684px;top:981px;width:580px;height:100.500px;border:1.500px solid #a4a6ae;border-radius:11px;background:#fff"></div>
   <div class="abs" style="left:777px;top:988px;width:125.500px;height:21px;background:#b7d2f6"></div>
   <div class="t" style="left:706px;top:988.500px;font-size:14.260px;line-height:21px;color:#2a2b30">請幫我透過markdown語法的格式將出師表進行詳細的分析，並且</div>
   <div class="t" style="left:706px;top:1010px;font-size:14.260px;line-height:21px;color:#2a2b30">結合國語文教學的精神，盡可能詳盡一些</div>
   <div class="abs" style="left:921px;top:1029px;width:42px;height:1.200px;background:#333"></div>
   <div class="t" style="left:1150.500px;top:1001px;font-size:11.300px;color:#7a7c84">3 個來源</div>
   <div class="abs" style="left:1213px;top:988.500px;width:43px;height:43px;border-radius:50%;background:#3a3fc6"></div>
   <svg class="abs" style="left:1225.500px;top:1001.500px" width="19" height="17" viewBox="0 0 19 17"><path d="M1.500 1.500 17.500 8.500 1.500 15.500V10.300L9.500 8.500 1.500 6.700z" fill="none" stroke="#fff" stroke-width="1.700" stroke-linejoin="round"/></svg>
   <div class="pill" style="left:700px;top:1046.500px;width:268px;height:26.500px;border-color:#e2e4ec"></div>
   <div class="t" style="left:715px;top:1050.500px;font-size:12.400px;color:#55575e">《出師表》如何體現諸葛亮對先帝的感念？</div>
   <div class="abs" style="left:970px;top:1040px;width:292px;height:40px;overflow:hidden"><div class="pill" style="left:8px;top:6.500px;width:300px;height:26.500px;border-color:#e2e4ec"></div>
   <div class="t" style="left:19px;top:10.500px;font-size:12.400px;color:#55575e;width:238px;overflow:hidden;-webkit-mask-image:linear-gradient(90deg,#000 190px,transparent 236px);mask-image:linear-gradient(90deg,#000 190px,transparent 236px)">《出師表》中，作者如何建議後主處理政事？</div></div>
   <div class="abs" style="left:1224px;top:1042px;width:34px;height:34px;border-radius:50%;background:#fff;box-shadow:0 1px 4px rgba(0,0,0,.3)"></div>
   <svg class="abs" style="left:1237px;top:1053px" width="8" height="12" viewBox="0 0 8 12"><path d="M1.500 1.500 6 6 1.500 10.500" fill="none" stroke="#3d6fd6" stroke-width="1.800"/></svg>
   <div class="t" style="left:890.500px;top:1098px;font-size:10.900px;color:#777980">NotebookLM 提供的資訊未必正確，請查證回覆內容。</div>
   <!-- ===== studio panel ===== -->
   <div class="panel" style="left:1293px;top:378px;width:474.500px;height:718px"></div>
   <div class="hr" style="left:1293px;top:420px;width:474.500px"></div>
   <div class="t" style="left:1306.500px;top:390px;font-size:14px;color:#26272b">Studio</div>
   <svg class="abs" style="left:1738px;top:391px" width="17" height="16" viewBox="0 0 17 16"><rect x="1" y="1" width="15" height="14" rx="1.500" fill="none" stroke="#333" stroke-width="1.700"/><path d="M11.200 1v14" stroke="#333" stroke-width="1.700"/></svg>
   <div class="t" style="left:1306.500px;top:445px;font-size:14.200px;color:#303236">語音摘要</div>
   <svg class="abs" style="left:1733px;top:445px" width="19" height="19" viewBox="0 0 19 19"><circle cx="9.500" cy="9.500" r="8" fill="none" stroke="#222" stroke-width="1.700"/><path d="M9.500 8.500v5" stroke="#222" stroke-width="1.900"/><circle cx="9.500" cy="5.800" r="1.100" fill="#222"/></svg>
   <!-- audio card -->
   <div class="abs" style="left:1307px;top:489px;width:447px;height:99.500px;border:1.200px solid #e3e5ee;border-radius:15px;background:#fff"></div>
   <div class="t" style="left:1315.500px;top:500.500px;font-size:12.300px;letter-spacing:.05px"><b>【出師表】教學備課展示</b></div>
   <svg class="abs" style="left:1588px;top:500px" width="20" height="20" viewBox="0 0 20 20"><path d="M1.500 8.500h3.800v9H1.500z M5.300 9.500 9.300 2.300c1.300-.1 2.200.9 1.900 2.300L10.500 8h6.200c1.100 0 1.900 1 1.600 2.100l-1.500 5.900c-.2.900-1 1.500-1.900 1.500H5.300" fill="none" stroke="#333" stroke-width="1.700" stroke-linejoin="round"/></svg>
   <svg class="abs" style="left:1630px;top:501px" width="20" height="20" viewBox="0 0 20 20"><g transform="rotate(180 10 10)"><path d="M1.500 8.500h3.800v9H1.500z M5.300 9.500 9.300 2.300c1.300-.1 2.200.9 1.900 2.300L10.500 8h6.200c1.100 0 1.900 1 1.600 2.100l-1.500 5.900c-.2.900-1 1.500-1.900 1.500H5.300" fill="none" stroke="#333" stroke-width="1.700" stroke-linejoin="round"/></g></svg>
   <svg class="abs" style="left:1675px;top:499px" width="16" height="21" viewBox="0 0 16 21"><path d="M5 8H2v11.500h12V8h-3" fill="none" stroke="#333" stroke-width="1.700" stroke-linejoin="round"/><path d="M8 13.500V2M4.500 5 8 1.500 11.500 5" fill="none" stroke="#333" stroke-width="1.700"/></svg>
   <svg class="abs" style="left:1723.500px;top:502px" width="4" height="16" viewBox="0 0 4 16"><circle cx="2" cy="2" r="1.700" fill="#333"/><circle cx="2" cy="8" r="1.700" fill="#333"/><circle cx="2" cy="14" r="1.700" fill="#333"/></svg>
   <div class="abs" style="left:1314.500px;top:535px;width:43px;height:43px;border-radius:50%;background:#c5caee"></div>
   <svg class="abs" style="left:1331px;top:550px" width="11" height="13" viewBox="0 0 11 13"><path d="M1.500 1.500v10l8-5z" fill="none" stroke="#2b2c33" stroke-width="1.600" stroke-linejoin="round"/></svg>
   <div class="abs" style="left:1379px;top:551.500px;width:361px;height:3px;border-radius:2px;background:#d5dff5"></div>
   <div class="abs" style="left:1379px;top:550.500px;width:80px;height:5px;border-radius:2.500px;background:#3b6fd8"></div>
   <div class="abs" style="left:1450.500px;top:544.500px;width:17px;height:17px;border-radius:50%;background:#3b6fd8"></div>
   <div class="t" style="left:1379px;top:563.500px;font-size:12.200px;color:#303236">02:57 / 13:32</div>
   <div class="pill" style="left:1307px;top:597px;width:446.500px;height:30px"></div>
   <div class="t" style="left:1474.500px;top:602.500px;font-size:12.200px;color:#55575e">互動模式</div>
   <div class="abs" style="left:1530px;top:603.500px;width:56px;height:18px;border:1.200px solid #666;border-radius:9px"></div>
   <div class="t" style="left:1538px;top:603.500px;font-size:9.800px;color:#55575e;font-weight:700;letter-spacing:.2px">BETA 版</div>
   <div class="hr" style="left:1293px;top:648px;width:474.500px"></div>
   <div class="t" style="left:1306.500px;top:662px;font-size:14.200px;color:#303236">記事</div>
   <svg class="abs" style="left:1744.500px;top:663px" width="4" height="16" viewBox="0 0 4 16"><circle cx="2" cy="2" r="1.700" fill="#333"/><circle cx="2" cy="8" r="1.700" fill="#333"/><circle cx="2" cy="14" r="1.700" fill="#333"/></svg>
   <div class="abs" style="left:1756px;top:695px;width:8.500px;height:401px;border-radius:4px 4px 0 0;background:#e4e6f0"></div>
   <!-- note buttons -->
   <div class="pill" style="left:1306.500px;top:706.500px;width:432px;height:31.500px"></div>
   <div class="t" style="left:1487px;top:712.500px;font-size:12.400px;color:#55575e"><span style="font-size:16px;vertical-align:-1.500px;margin-right:10px">+</span>新增記事</div>
   <div class="pill" style="left:1306.500px;top:745.500px;width:212.500px;height:28.500px"></div>
   <div class="pill" style="left:1526px;top:745.500px;width:212.500px;height:28.500px"></div>
   <div class="pill" style="left:1306.500px;top:780.500px;width:212.500px;height:28.500px"></div>
   <div class="pill" style="left:1526px;top:780.500px;width:212.500px;height:28.500px"></div>
   <svg class="abs" style="left:1375px;top:753.500px" width="15" height="13" viewBox="0 0 15 13"><path d="M7.500 1 14 4.500 7.500 8 1 4.500z" fill="none" stroke="#555" stroke-width="1.300" stroke-linejoin="round"/><path d="M3.500 6.500v3.200c1 1.200 2.400 1.800 4 1.800s3-.6 4-1.800V6.500" fill="none" stroke="#555" stroke-width="1.300"/></svg>
   <div class="t" style="left:1398px;top:750.500px;font-size:12.400px;color:#55575e">研讀指南</div>
   <svg class="abs" style="left:1595px;top:752.500px" width="14" height="14" viewBox="0 0 14 14"><path d="M8 1.500H1.500v11h10V7" fill="none" stroke="#555" stroke-width="1.300"/><path d="M3.800 5h3M3.800 7.500h4M3.800 10h5" stroke="#555" stroke-width="1.100"/><path d="M11 .5l.8 1.700 1.700.8-1.700.8L11 5.500l-.8-1.700L8.500 3l1.700-.8z" fill="#555"/></svg>
   <div class="t" style="left:1617px;top:750.500px;font-size:12.400px;color:#55575e">簡報文件</div>
   <svg class="abs" style="left:1375px;top:788.500px" width="15" height="14" viewBox="0 0 15 14"><path d="M1.500 1.500h12v8.500H5L1.500 13z" fill="none" stroke="#555" stroke-width="1.300" stroke-linejoin="round"/><path d="M4.200 4.300h6.600M4.200 6.700h4.500" stroke="#555" stroke-width="1.100"/></svg>
   <div class="t" style="left:1398px;top:785.500px;font-size:12.400px;color:#55575e">常見問題</div>
   <svg class="abs" style="left:1600px;top:789.500px" width="16" height="11" viewBox="0 0 16 11"><path d="M1 9.500 5 5l3 3 4-5.500 3 2.500" fill="none" stroke="#444" stroke-width="1.600" stroke-linejoin="round"/></svg>
   <div class="t" style="left:1623.500px;top:785.500px;font-size:12.400px;color:#55575e">時間軸</div>
   <!-- notes list -->
   <div class="abs" style="left:1293px;top:815px;width:462px;height:281px;overflow:hidden">
   <div class="abs" style="left:-1293px;top:-815px;width:2048px;height:1331px">
    <svg class="abs nic" style="left:1319.500px;top:831.500px" width="17" height="17" viewBox="0 0 17 17"><rect x="1" y="1" width="15" height="15" rx="2" fill="#fff7d6" stroke="#e8c545" stroke-width="1.600"/><path d="M4 5.500h9M4 8.500h9M4 11.500h6" stroke="#e8c545" stroke-width="1.300"/></svg>
    <div class="t nt" style="left:1351.500px;top:824.500px"><b>課堂問答學習單</b></div>
    <div class="t nd" style="left:1351.500px;top:843px">《出師表》填充式學習單 一、 文章概覽 《出師表》的作者是</div>
    <div class="t nd" style="left:1351.500px;top:861px">__________，他是__________（朝代）時期的人物，在歷史上以...</div>
    <svg class="abs nic" style="left:1319.500px;top:895.500px" width="17" height="17" viewBox="0 0 17 17"><rect x="1" y="1" width="15" height="15" rx="2" fill="#fff7d6" stroke="#e8c545" stroke-width="1.600"/><path d="M4 5.500h9M4 8.500h9M4 11.500h6" stroke="#e8c545" stroke-width="1.300"/></svg>
    <div class="t nt" style="left:1351.500px;top:889px"><b>回家小測驗</b></div>
    <div class="t nd" style="left:1351.500px;top:907px">十五題《出師表》選擇練習題 一、 文意理解 (5題) 下列哪一項不是</div>
    <div class="t nd" style="left:1351.500px;top:925px">諸葛亮在《出師表》中提出的治國建議？ [1, 2] (A) 廣開言路，鼓勵...</div>
    <svg class="abs nic" style="left:1319.500px;top:959.500px" width="17" height="17" viewBox="0 0 17 17"><rect x="1" y="1" width="15" height="15" rx="2" fill="#fff7d6" stroke="#e8c545" stroke-width="1.600"/><path d="M4 5.500h9M4 8.500h9M4 11.500h6" stroke="#e8c545" stroke-width="1.300"/></svg>
    <div class="t nt" style="left:1351.500px;top:953px"><b>教學簡報大綱</b></div>
    <div class="t nd" style="left:1351.500px;top:971px">高中國文課簡報大綱：《出師表》 適用對象： 高二學生 教學時間：</div>
    <div class="t nd" style="left:1351.500px;top:989px">50 分鐘 幻燈片一：課程標題與引言 標題：從臥龍先生到諸葛丞相...</div>
    <svg class="abs nic" style="left:1319.500px;top:1023.500px" width="17" height="17" viewBox="0 0 17 17"><rect x="1" y="1" width="15" height="15" rx="2" fill="#fff7d6" stroke="#e8c545" stroke-width="1.600"/><path d="M4 5.500h9M4 8.500h9M4 11.500h6" stroke="#e8c545" stroke-width="1.300"/></svg>
    <div class="t nt" style="left:1351.500px;top:1017px"><b>課程教案</b></div>
    <div class="t nd" style="left:1351.500px;top:1035px">高二國文課教案：《出師表》 教學目標： 透過《出師表》的學習，提</div>
    <div class="t nd" style="left:1351.500px;top:1053px">升學生文言文閱讀理解能力，掌握重要詞彙、句型及文言文特殊語...</div>
    <svg class="abs nic" style="left:1319.500px;top:1087.500px" width="17" height="17" viewBox="0 0 17 17"><rect x="1" y="1" width="15" height="15" rx="2" fill="#fff7d6" stroke="#e8c545" stroke-width="1.600"/><path d="M4 5.500h9M4 8.500h9M4 11.500h6" stroke="#e8c545" stroke-width="1.300"/></svg>
    <div class="t nt" style="left:1351.500px;top:1081px"><b>出師表的內容概要</b></div>
   </div>
   </div>



  </div>
 </div>
 <!-- mute/pin overlay -->
 <div class="abs" style="left:931px;top:687.500px;width:184px;height:62.500px;border-radius:31.500px;background:rgba(104,105,107,.88)"></div>
 <svg class="abs" style="left:945px;top:703px" width="30" height="30" viewBox="0 0 30 30"><path d="M9 2h12.500v3.200h-2.200v8l4 4.200v2.300H7v-2.300l4-4.200v-8H9z" fill="#fff"/><path d="M15.100 19v9.500" stroke="#fff" stroke-width="2.800"/><path d="M5 2.500 28 25.500" stroke="#76777a" stroke-width="3.600"/><path d="M3 4.500 27 28" stroke="#fff" stroke-width="2.700"/></svg>
 <svg class="abs" style="left:1008px;top:704px" width="29" height="28" viewBox="0 0 29 28"><path d="M2.800 9.800h5.700l7.300-6.300v21L8.500 18.200H2.800z" fill="none" stroke="#fff" stroke-width="2.800" stroke-linejoin="miter"/><path d="M19.500 8.300a6.800 6.800 0 0 1 0 11.400" fill="none" stroke="#fff" stroke-width="2.700"/><path d="M19.500 2.600a12 12 0 0 1 0 22.800" fill="none" stroke="#fff" stroke-width="2.700"/></svg>
 <svg class="abs" style="left:1080.400px;top:707px" width="7" height="23" viewBox="0 0 7 23"><circle cx="3.500" cy="3.300" r="3" fill="#fff"/><circle cx="3.500" cy="11.400" r="3" fill="#fff"/><circle cx="3.500" cy="19.500" r="3" fill="#fff"/></svg>
 <!-- zoom overlay -->
 <div class="abs" style="left:890px;top:1026px;width:264.500px;height:61px;border-radius:30.500px;background:rgba(98,99,101,.76)"></div><div class="abs" style="left:1046px;top:1055.500px;width:18px;height:2.200px;background:rgba(200,200,200,.45)"></div>
 <svg class="abs" style="left:909px;top:1040px" width="30" height="30" viewBox="0 0 30 30"><circle cx="12.500" cy="12.500" r="9" fill="none" stroke="#9c9d9f" stroke-width="2.300" opacity=".75"/><path d="M8 12.500h9M19.500 19.500 27 27" stroke="#9c9d9f" stroke-width="2.400" opacity=".75"/></svg>
 <div class="abs" style="left:957.500px;top:1040.500px;font-size:25px;line-height:32px;color:#fff;letter-spacing:-.2px;white-space:nowrap">100%</div>
 <svg class="abs" style="left:1110px;top:1046px" width="22" height="22" viewBox="0 0 22 22"><path d="M11 0v22M0 11h22" stroke="#fff" stroke-width="2.500"/></svg>
 <!-- self tile pill -->
 <div class="abs" style="left:1754px;top:1044px;width:249.500px;height:50px;border-radius:11px;background:#4a4d51"></div>
 <div class="abs" style="left:1765px;top:1052px;width:34px;height:34px;border-radius:50%;background:#6d7074"></div>
 <svg class="abs" style="left:1772px;top:1058.500px" width="20" height="22" viewBox="0 0 20 22"><path d="M10 1.500a2.800 2.800 0 0 1 2.800 2.800v5.400a2.800 2.800 0 0 1-5.600 0V4.300A2.800 2.800 0 0 1 10 1.500z" fill="#fff"/><path d="M4 9.700a6 6 0 0 0 12 0M10 15.700v4" fill="none" stroke="#fff" stroke-width="1.800"/><path d="M2.500 2.500 18 19.500" stroke="#6d7074" stroke-width="4.200"/><path d="M2 3.500 17.500 20.500" stroke="#fff" stroke-width="1.800"/></svg>
 <svg class="abs" style="left:1811px;top:1056px" width="31" height="28" viewBox="0 0 31 28"><path d="M8 4.500h12.500a1.800 1.800 0 0 1 1.800 1.800v9M22.300 19v1.700a1.800 1.800 0 0 1-1.800 1.800H3.800A1.800 1.800 0 0 1 2 20.700V6.300c0-.9.600-1.600 1.400-1.800" fill="none" stroke="#a2a5a9" stroke-width="2.100"/><path d="M22.300 11 29 6v15l-6.700-5z" fill="#a2a5a9"/><path d="M2 1.500 28 27" stroke="#a2a5a9" stroke-width="2.100"/></svg>
 <div class="abs" style="left:1858px;top:1055px;font-size:19.300px;line-height:28px;color:#fff;white-space:nowrap">竹光國中</div>
 <svg class="abs" style="left:1970px;top:1058px" width="23" height="23" viewBox="0 0 23 23"><path d="M2 21 21 2M13 2h8v8M2 13v8h8" fill="none" stroke="#fff" stroke-width="2.100"/></svg>

 <!-- bottom bar -->
 <div class="abs" style="left:34px;top:1158px;font-size:21.600px;line-height:30px;color:#e8eaed;white-space:nowrap">下午<span style="letter-spacing:.5px">2:02</span></div>
 <div class="abs" style="left:140px;top:1161.500px;width:1.500px;height:23px;background:#dadce0"></div>
 <div class="abs" style="left:158px;top:1158px;font-size:21.600px;line-height:30px;color:#e8eaed;white-space:nowrap;letter-spacing:1.230px">notebooklm研習</div>
 <!-- mic group -->
 <div class="abs" style="left:631px;top:1139px;width:122.500px;height:66.500px;border-radius:18px;background:#5a1b14"></div>
 <div class="abs" style="left:686.500px;top:1139px;width:67px;height:66.500px;border-radius:17px;background:#f7dedb"></div>
 <svg class="abs" style="left:656px;top:1167px" width="14" height="9" viewBox="0 0 14 9"><path d="M1.500 7.500 7 2l5.500 5.500" fill="none" stroke="#f9dedc" stroke-width="1.900"/></svg>
 <svg class="abs" style="left:706px;top:1157px" width="28" height="30" viewBox="0 0 28 30"><path d="M14 2.500a4 4 0 0 1 4 4v7a4 4 0 0 1-8 0v-7a4 4 0 0 1 4-4z" fill="#410e0b"/><path d="M6 13.500a8 8 0 0 0 16 0M14 21.500v5.500" fill="none" stroke="#410e0b" stroke-width="2.500"/><path d="M5.500 3 25.500 25.500" stroke="#f7dedb" stroke-width="5"/><path d="M4 4.500 24 27" stroke="#410e0b" stroke-width="2.500"/></svg>
 <!-- cam group -->
 <div class="abs" style="left:765px;top:1139px;width:122.500px;height:66.500px;border-radius:18px;background:#5a1b14"></div>
 <div class="abs" style="left:820.500px;top:1139px;width:67px;height:66.500px;border-radius:17px;background:#f7dedb"></div>
 <svg class="abs" style="left:790px;top:1167px" width="14" height="9" viewBox="0 0 14 9"><path d="M1.500 7.500 7 2l5.500 5.500" fill="none" stroke="#f9dedc" stroke-width="1.900"/></svg>
 <svg class="abs" style="left:838px;top:1157px" width="32" height="30" viewBox="0 0 32 30"><path d="M9.500 6.500h11a1.800 1.800 0 0 1 1.800 1.800v8.200M22.300 21v.7a1.800 1.800 0 0 1-1.800 1.800H5.300a1.800 1.800 0 0 1-1.800-1.800V8.300c0-.9.600-1.600 1.400-1.800" fill="none" stroke="#410e0b" stroke-width="2.600"/><path d="M22.300 12.500l6.200-4.500v14l-6.200-4.500z" fill="#410e0b"/><path d="M3 2.500 27.500 27.500" stroke="#410e0b" stroke-width="2.600"/></svg>
 <!-- round buttons -->
 <div class="abs gb" style="left:899px;width:77px"></div>
 <svg class="abs" style="left:924px;top:1160px" width="27" height="24" viewBox="0 0 27 24"><rect x="1.500" y="2" width="24" height="20" rx="2.500" fill="none" stroke="#e3e3e3" stroke-width="2.700"/><path d="M11.700 9.600H6.600v4.800h5.100M20.400 9.600h-5.100v4.800h5.100" fill="none" stroke="#e3e3e3" stroke-width="2.500"/></svg>
 <div class="abs gb" style="left:988px;width:77px"></div>
 <svg class="abs" style="left:1012.500px;top:1158px" width="28" height="28" viewBox="0 0 28 28"><circle cx="14" cy="14" r="11.700" fill="none" stroke="#e3e3e3" stroke-width="2.700"/><circle cx="9.800" cy="11" r="1.900" fill="#e3e3e3"/><circle cx="18.200" cy="11" r="1.900" fill="#e3e3e3"/><path d="M7.800 15.800a6.400 6.400 0 0 0 12.400 0z" fill="#e3e3e3"/></svg>
 <div class="abs gb" style="left:1077.500px;width:77px"></div>
 <svg class="abs" style="left:1100.500px;top:1159px" width="30" height="26" viewBox="0 0 30 26"><rect x="1.500" y="2" width="27" height="22" rx="2.500" fill="none" stroke="#e3e3e3" stroke-width="2.700"/><path d="M15 18.500V9M10.800 12.700 15 8.500 19.200 12.700" fill="none" stroke="#e3e3e3" stroke-width="2.700"/></svg>
 <div class="abs gb" style="left:1166.500px;width:77px"></div>
 <svg class="abs" style="left:1191px;top:1155px" width="28" height="34" viewBox="0 0 28 34"><path d="M8 18V6.500a1.900 1.900 0 0 1 3.800 0V15M11.800 15V3.800a1.900 1.900 0 0 1 3.800 0V15M15.600 15V5.500a1.900 1.900 0 0 1 3.800 0V16M19.400 16V9.500a1.900 1.900 0 0 1 3.800 0V22c0 5.500-3.500 9.500-8.700 9.500-3.700 0-6-1.700-8-5L2.500 19.500c-.6-1.100 0-2.200 1.100-2.500 1-.3 2 .1 2.700 1L8 20.500z" fill="none" stroke="#e3e3e3" stroke-width="2.500" stroke-linejoin="round"/></svg>
 <div class="abs gb" style="left:1255.500px;width:50px"></div>
 <svg class="abs" style="left:1277px;top:1160px" width="7" height="24" viewBox="0 0 7 24"><circle cx="3.500" cy="3" r="2.600" fill="#e3e3e3"/><circle cx="3.500" cy="12" r="2.600" fill="#e3e3e3"/><circle cx="3.500" cy="21" r="2.600" fill="#e3e3e3"/></svg>
 <div class="abs" style="left:1316.500px;top:1139px;width:100.500px;height:66.500px;border-radius:33.500px;background:#cf4739"></div>
 <svg class="abs" style="left:1351px;top:1165px" width="32" height="14" viewBox="0 0 32 14"><path d="M16 1.500c-5.500 0-10.500 1.700-14 5 -.7.700-.7 1.700 0 2.400l2.300 2.300c.6.600 1.500.7 2.200.2l3-2.100c.5-.4.800-.9.800-1.500V5.500c3.600-1.100 7.800-1.100 11.400 0v2.300c0 .6.300 1.100.8 1.500l3 2.100c.7.500 1.600.4 2.200-.2L30 8.900c.7-.7.700-1.700 0-2.400-3.500-3.300-8.500-5-14-5z" fill="none" stroke="#fff" stroke-width="2"/></svg>
 <!-- right icons -->
 <svg class="abs" style="left:1715.500px;top:1157.500px" width="29" height="29" viewBox="0 0 29 29"><circle cx="14.500" cy="14.500" r="12.500" fill="none" stroke="#fff" stroke-width="2.300"/><path d="M14.500 13v8" stroke="#fff" stroke-width="2.600"/><circle cx="14.500" cy="9" r="1.600" fill="#fff"/></svg>
 <svg class="abs" style="left:1781px;top:1159px" width="33" height="26" viewBox="0 0 33 26"><circle cx="12" cy="7.500" r="4.800" fill="none" stroke="#fff" stroke-width="2.400"/><path d="M2 23.500v-2.300c0-3.300 6.600-5 10-5s10 1.700 10 5v2.300z" fill="none" stroke="#fff" stroke-width="2.400" stroke-linejoin="round"/><path d="M20 2.900a4.800 4.800 0 0 1 0 9.200M24.500 16.800c3.300.8 6.500 2.300 6.500 4.400v2.300h-4" fill="none" stroke="#fff" stroke-width="2.400"/></svg>
 <div class="abs" style="left:1798.500px;top:1126px;width:28.500px;height:28.500px;border-radius:50%;background:#5f6368;color:#fff;font-size:16.500px;line-height:28px;text-align:center">7</div>
 <svg class="abs" style="left:1849px;top:1158px" width="30" height="29" viewBox="0 0 30 29"><path d="M2.500 2.500h25v19.500H8L2.500 27.500z" fill="none" stroke="#fff" stroke-width="2.300" stroke-linejoin="round"/><path d="M7.500 8h15M7.500 12.300h15M7.500 16.600h10" stroke="#fff" stroke-width="2.200"/></svg>
 <svg class="abs" style="left:1917px;top:1157px" width="29" height="30" viewBox="0 0 29 30"><path d="M14 2.500 19.500 12h-11z" fill="none" stroke="#fff" stroke-width="2.300" stroke-linejoin="round"/><rect x="2.500" y="17.500" width="9.500" height="9.500" fill="none" stroke="#fff" stroke-width="2.300"/><circle cx="22" cy="22.300" r="5" fill="none" stroke="#fff" stroke-width="2.300"/></svg>
 <svg class="abs" style="left:1985px;top:1155px" width="30" height="33" viewBox="0 0 30 33"><path d="M7 12V8.500a6 6 0 0 1 12 0V12" fill="none" stroke="#fff" stroke-width="2.400"/><path d="M16 28.500H3.500v-16.500h19v5" fill="none" stroke="#fff" stroke-width="2.400" stroke-linejoin="round"/><circle cx="22.500" cy="25" r="6.500" fill="#fff"/><circle cx="22.500" cy="23" r="2" fill="#202124"/><path d="M18.500 28.200c.8-1.500 2.300-2.200 4-2.200s3.200.7 4 2.200c-1 1.300-2.400 2-4 2s-3-.7-4-2z" fill="#202124"/></svg>

</div>

 </div>
</div>

<!-- ================= DOCK ================= -->
<div class="abs" style="left:996px;top:1224px;width:56px;height:11px;border:1.700px solid #c4c4c4;border-radius:5.500px;background:#060606"></div>

<div class="abs" style="left:51.500px;top:1250px;width:1946px;height:73px;border-radius:22px;background:linear-gradient(90deg,rgba(40,51,38,.95) 0%,rgba(38,47,36,.95) 30%,rgba(41,52,40,.95) 70%,rgba(42,52,40,.95) 86%,rgba(58,52,40,.95) 91.500%,rgba(50,46,38,.95) 96%,rgba(38,40,37,.95) 100%);box-shadow:inset 0 0 0 1.200px rgba(255,255,255,.22),0 0 0 .500px rgba(0,0,0,.6)"></div>
<div class="abs dk" style="left:61.5px;top:1260px;width:48.5px;height:48.5px;border-radius:11px;background:linear-gradient(180deg,#4db5fa,#1a68de);overflow:hidden"><svg class="abs" style="left:0;top:0;" width="48.5" height="48.5" viewBox="0 0 48 48"><path d="M30.500 0H48V48H29.500C27.500 42 26.800 36 26.800 29.500H22.300C22.500 18 25.500 8 30.500 0z" fill="#e9eef6"/><path d="M30.500 0C25.500 8 22.500 18 22.300 29.500H26.800C26.800 36 27.500 42 29.500 48" fill="none" stroke="#1d2a3a" stroke-width="1.300"/><path d="M12.500 13v5M35.500 13v5" stroke="#1d2a3a" stroke-width="2.200" stroke-linecap="round"/><path d="M9 32.500c9 7.500 22 7.500 31 0" fill="none" stroke="#1d2a3a" stroke-width="2" stroke-linecap="round"/></svg></div>
<div class="abs dk" style="left:124px;top:1260px;width:48.5px;height:48.5px;border-radius:11px;background:linear-gradient(180deg,#c4c4c4,#a9a9a9);"><svg class="abs" style="left:0;top:0;" width="48.5" height="48.5" viewBox="0 0 48 48"><rect x="8.5" y="8.5" width="8.500" height="8.500" rx="2.200" fill="#5fd651"/><rect x="20.0" y="8.5" width="8.500" height="8.500" rx="2.200" fill="#f7b731"/><rect x="31.5" y="8.5" width="8.500" height="8.500" rx="2.200" fill="#f39c34"/><rect x="8.5" y="20.0" width="8.500" height="8.500" rx="2.200" fill="#e0392d"/><rect x="20.0" y="20.0" width="8.500" height="8.500" rx="2.200" fill="#b8bcc2"/><rect x="31.5" y="20.0" width="8.500" height="8.500" rx="2.200" fill="#ef476f"/><rect x="8.5" y="31.5" width="8.500" height="8.500" rx="2.200" fill="#a24be0"/><rect x="20.0" y="31.5" width="8.500" height="8.500" rx="2.200" fill="#3fa2f7"/><rect x="31.5" y="31.5" width="8.500" height="8.500" rx="2.200" fill="#4fd0b5"/></svg></div>
<div class="abs dk" style="left:187px;top:1260px;width:48.5px;height:48.5px;border-radius:11px;background:linear-gradient(180deg,#fdfdfd,#e9e9ea);"><svg class="abs" style="left:0;top:0;" width="48.5" height="48.5" viewBox="0 0 48 48"><circle cx="24" cy="24" r="20" fill="#2c8cf0"/><circle cx="24" cy="24" r="20" fill="none" stroke="#bfe0ff" stroke-width="3" stroke-dasharray=".8 2.340" opacity=".85"/><path d="M36.500 11.500 26.500 26.500 21.500 21.500z" fill="#f0453a"/><path d="M11.500 36.500 21.500 21.500 26.500 26.500z" fill="#f4f6f8"/></svg></div>
<div class="abs dk" style="left:249.5px;top:1260px;width:48.5px;height:48.5px;border-radius:11px;background:linear-gradient(180deg,#6fe06b,#2fc24a);"><svg class="abs" style="left:0;top:0;" width="48.5" height="48.5" viewBox="0 0 48 48"><ellipse cx="24" cy="22.500" rx="17" ry="14" fill="#f3fbf2"/><path d="M13 32c0 4-2 6-5 8 5 0 9-1.500 12-4.500z" fill="#f3fbf2"/></svg></div>
<div class="abs dk" style="left:312px;top:1260px;width:48.5px;height:48.5px;border-radius:11px;background:linear-gradient(180deg,#2a6ff0,#46b6f8);"><svg class="abs" style="left:0;top:0;" width="48.5" height="48.5" viewBox="0 0 48 48"><rect x="7" y="13" width="34" height="23" rx="3" fill="#f4f6fa"/><path d="M8 15l16 12 16-12" fill="none" stroke="#b9c2cf" stroke-width="1.600"/><path d="M8 35l12-11M40 35 28 24" stroke="#ccd3dd" stroke-width="1.300"/></svg></div>
<div class="abs dk" style="left:375px;top:1260px;width:48.5px;height:48.5px;border-radius:11px;background:#7ed56f;overflow:hidden"><svg class="abs" style="left:0;top:0;" width="48.5" height="48.5" viewBox="0 0 48 48"><rect width="48" height="48" fill="#8ad97a"/><path d="M0 30 20 48H0z" fill="#f08bc0"/><path d="M26 48 48 30v18z" fill="#f5d04a"/><path d="M0 20 48 48M-4 40 30 0" stroke="#f4f4ee" stroke-width="6"/><rect x="14.500" y="0" width="9" height="30" fill="#2f86ee"/><path d="M30 0h18v16c-2 2-5 3-8 3-6 0-10-4-10-10z" fill="#d9d9d4"/><path d="M36 0h12v10c-1 1-3 2-5 2-4 0-7-3-7-7z" fill="#6fcf62"/><circle cx="19" cy="30" r="11.500" fill="#2f86ee" stroke="#e6f0ff" stroke-width="2"/><path d="M19 22.500l5.500 13.500-5.500-3.500-5.500 3.500z" fill="#fff"/></svg></div>
<div class="abs dk" style="left:437.5px;top:1260px;width:48.5px;height:48.5px;border-radius:11px;background:linear-gradient(180deg,#ffffff,#f0f0f0);"><svg class="abs" style="left:0;top:0;" width="48.5" height="48.5" viewBox="0 0 48 48"><ellipse cx="24" cy="13.500" rx="5.800" ry="9.800" fill="#f5a623" fill-opacity=".82" transform="rotate(0 24 24)"/><ellipse cx="24" cy="13.500" rx="5.800" ry="9.800" fill="#f4d13a" fill-opacity=".82" transform="rotate(45 24 24)"/><ellipse cx="24" cy="13.500" rx="5.800" ry="9.800" fill="#9bd14e" fill-opacity=".82" transform="rotate(90 24 24)"/><ellipse cx="24" cy="13.500" rx="5.800" ry="9.800" fill="#4fc3a1" fill-opacity=".82" transform="rotate(135 24 24)"/><ellipse cx="24" cy="13.500" rx="5.800" ry="9.800" fill="#4a90e2" fill-opacity=".82" transform="rotate(180 24 24)"/><ellipse cx="24" cy="13.500" rx="5.800" ry="9.800" fill="#7b6fd6" fill-opacity=".82" transform="rotate(225 24 24)"/><ellipse cx="24" cy="13.500" rx="5.800" ry="9.800" fill="#c665c9" fill-opacity=".82" transform="rotate(270 24 24)"/><ellipse cx="24" cy="13.500" rx="5.800" ry="9.800" fill="#f0605a" fill-opacity=".82" transform="rotate(315 24 24)"/></svg></div>
<div class="abs dk" style="left:500.5px;top:1260px;width:48.5px;height:48.5px;border-radius:11px;background:linear-gradient(180deg,#6fe06b,#2fc24a);"><svg class="abs" style="left:0;top:0;" width="48.5" height="48.5" viewBox="0 0 48 48"><rect x="7" y="14.500" width="24" height="19" rx="5" fill="#f3fbf2"/><path d="M33 21l8-5.500v17L33 27z" fill="#f3fbf2" stroke="#f3fbf2" stroke-width="1.500" stroke-linejoin="round"/></svg></div>
<div class="abs dk" style="left:563px;top:1260px;width:48.5px;height:48.5px;border-radius:11px;background:#fbfbfb;overflow:hidden"><div class="abs" style="left:0;top:0;width:100%;height:14.500px;background:#f0524a"></div><div class="abs" style="left:0;top:1.500px;width:100%;text-align:center;font-size:9.500px;line-height:12px;color:#fff;font-weight:700;letter-spacing:.5px">3月</div><div class="abs" style="left:0;top:14px;width:100%;text-align:center;font-size:29px;line-height:33px;color:#2a2a2c">3</div></div>
<div class="abs" style="left:668px;top:1267px;width:8px;height:36px;border-radius:2px;background:linear-gradient(180deg,#c9c9c9 0 28%,#4a90e2 28% 52%,#f39c34 52% 76%,#6fcf62 76% 100%)"></div>
<div class="abs dk" style="left:626px;top:1260px;width:46px;height:48.5px;border-radius:11px;background:linear-gradient(180deg,#b48b55,#9c7744);"><svg class="abs" style="left:0;top:0;" width="48.5" height="48.5" viewBox="0 0 48 48"><circle cx="24" cy="24" r="13.500" fill="none" stroke="#8a673a" stroke-width="1.700"/><circle cx="24" cy="20" r="4.800" fill="#8a673a"/><path d="M14 33c1.500-5 5.500-7 10-7s8.500 2 10 7c-3 3-6.500 4.500-10 4.500S17 36 14 33z" fill="#8a673a"/></svg></div>
<div class="abs dk" style="left:689.5px;top:1260px;width:48.5px;height:48.5px;border-radius:11px;background:linear-gradient(180deg,#ffffff,#f2f2f2);"><svg class="abs" style="left:0;top:0;" width="48.5" height="48.5" viewBox="0 0 48 48"><circle cx="9.500" cy="12.500" r="3.600" fill="#2f7cf0" stroke="#bcd5fb" stroke-width="1.400"/><circle cx="9.500" cy="24" r="3.600" fill="#e8443a" stroke="#f8c4c0" stroke-width="1.400"/><circle cx="9.500" cy="35.500" r="3.600" fill="#f39c12" stroke="#fbdcae" stroke-width="1.400"/><path d="M18 12.500h24M18 24h24M18 35.500h24" stroke="#cfcfd2" stroke-width="1.300"/></svg></div>
<div class="abs dk" style="left:752.5px;top:1260px;width:48.5px;height:48.5px;border-radius:11px;background:linear-gradient(180deg,#a5a5a7,#8a8a8c);box-shadow:inset 0 0 0 1px rgba(255,255,255,.18)"><svg class="abs" style="left:0;top:0;" width="48.5" height="48.5" viewBox="0 0 48 48"><path d="M12.500 37 21 13.500c1.200-3.300 5-3.300 6.200 0L35.500 37" fill="none" stroke="#ef4f6d" stroke-width="6.800" stroke-linecap="round" stroke-linejoin="round"/><path d="M40 16.500 33 33" stroke="#f58c9e" stroke-width="6" stroke-linecap="round"/><path d="M8.500 22.500l5 9.500c1.500 2.800 4 3.800 6.500 3" fill="none" stroke="#1c2ad0" stroke-width="6.500" stroke-linecap="round" stroke-linejoin="round"/><path d="M14 30.500h17" stroke="#2838e0" stroke-width="6" stroke-linecap="round"/><path d="M24 27.500l4 9" stroke="#ef4f6d" stroke-width="6" stroke-linecap="round" opacity=".85"/></svg></div>
<div class="abs dk" style="left:815px;top:1260px;width:48.5px;height:48.5px;border-radius:11px;background:linear-gradient(180deg,#f9d24a 0 10.500px,#f3f2ee 10.500px 100%);overflow:hidden"><svg class="abs" style="left:0;top:0;" width="48.5" height="48.5" viewBox="0 0 48 48"><path d="M0 12.500h48" stroke="#d8c98a" stroke-width="1" stroke-dasharray="1 1.500"/><path d="M0 24h48M0 34.500h48" stroke="#d9d8d4" stroke-width="1.100"/></svg></div>
<div class="abs dk" style="left:878px;top:1260px;width:48.5px;height:48.5px;border-radius:11px;background:linear-gradient(180deg,#ffffff,#f4f4f4);"><svg class="abs" style="left:0;top:0;" width="48.5" height="48.5" viewBox="0 0 48 48"><circle cx="19" cy="29.500" r="12.500" fill="#f2704a"/><circle cx="15" cy="26" r="7" fill="#f6a04d" opacity=".7"/><rect x="16.500" y="6.500" width="25" height="24.500" rx="2.500" fill="#5fc0ee"/><path d="M9.500 30c2-9 6-12 8-8s2 6 4 3 3-6 5-3 2 4 4 2 3-4 5-3" fill="none" stroke="#18304a" stroke-width="2.300" stroke-linecap="round"/></svg></div>
<div class="abs dk" style="left:940.5px;top:1260px;width:48.5px;height:48.5px;border-radius:11px;background:linear-gradient(180deg,#2a3432,#0f1414);"><svg class="abs" style="left:0;top:0;" width="48.5" height="48.5" viewBox="0 0 48 48"><g transform="translate(6 14.500) scale(.040)"><path fill="#f2f2f2" d="M318.700 268.700c-.2-36.700 16.400-64.400 50-84.800-18.800-26.900-47.200-41.700-84.700-44.600-35.500-2.800-74.300 20.700-88.500 20.700-15 0-49.400-19.700-76.400-19.700C63.300 141.200 4 184.800 4 273.500q0 39.300 14.400 81.200c12.800 36.700 59 126.700 107.200 125.200 25.200-.6 43-17.900 75.800-17.900 31.800 0 48.300 17.900 76.400 17.900 48.600-.7 90.400-82.500 102.600-119.300-65.200-30.700-61.700-90-61.700-91.900zm-56.600-164.200c27.300-32.400 24.800-61.900 24-72.500-24.100 1.400-52 16.400-67.900 34.900-17.500 19.800-27.800 44.300-25.600 71.900 26.100 2 49.900-11.400 69.500-34.300z"/></g><text x="22.500" y="33" font-family="Liberation Sans,sans-serif" font-size="22.500" fill="#f2f2f2" font-weight="400">tv</text></svg></div>
<div class="abs dk" style="left:1003.5px;top:1260px;width:48.5px;height:48.5px;border-radius:11px;background:linear-gradient(180deg,#fb5c74,#e5304a);"><svg class="abs" style="left:0;top:0;" width="48.5" height="48.5" viewBox="0 0 48 48"><path d="M19 11.500 36 8v22.500a5 4.300 0 1 1-3.500-4V14.800l-10 2.200V34a5 4.300 0 1 1-3.500-4z" fill="#fff"/></svg></div>
<div class="abs dk" style="left:1066.5px;top:1260px;width:48.5px;height:48.5px;border-radius:11px;background:linear-gradient(180deg,#47a7f8,#1c63de);"><svg class="abs" style="left:0;top:0;" width="48.5" height="48.5" viewBox="0 0 48 48"><path d="M12 8.500h24l2 12H10z" fill="#f2f6fb"/><rect x="9" y="20.500" width="30" height="3" rx="1" fill="#dfe7f2"/><path d="M24 23.500v16M16.500 40.500h15" stroke="#e6edf7" stroke-width="2.200" stroke-linecap="round"/><circle cx="24" cy="13.500" r="3.300" fill="#f0a030"/><path d="M24 13.500V10.200A3.300 3.300 0 0 1 27.300 13.500z" fill="#e04a3a"/><path d="M24 13.500h3.300A3.300 3.300 0 0 1 24 16.800z" fill="#5fc04a"/></svg></div>
<div class="abs dk" style="left:1129px;top:1260px;width:48.5px;height:48.5px;border-radius:11px;background:linear-gradient(180deg,#6fe05e,#22b03c);"><svg class="abs" style="left:0;top:0;" width="48.5" height="48.5" viewBox="0 0 48 48"><rect x="9" y="31" width="6" height="9" rx="1" fill="#f3fbf2"/><rect x="17.500" y="24" width="6" height="16" rx="1" fill="#f3fbf2"/><rect x="26" y="8" width="6" height="32" rx="1" fill="#f3fbf2"/><rect x="34.500" y="17" width="6" height="23" rx="1" fill="#f3fbf2"/></svg></div>
<div class="abs dk" style="left:1191.5px;top:1260px;width:48.5px;height:48.5px;border-radius:11px;background:linear-gradient(180deg,#fbb040,#ee8422);"><svg class="abs" style="left:0;top:0;" width="48.5" height="48.5" viewBox="0 0 48 48"><path d="M9 40.500h31" stroke="#fde6c4" stroke-width="1.600"/><path d="M38 8.500c1.500 1 1.500 3 .5 4.500L14 37l-4 2 1.500-4.500L33 9.500c1.500-1.700 3.500-2 5-1z" fill="#fbfbfb"/><path d="M23 22l3 2.500" stroke="#c8c8c8" stroke-width="1.500"/><path d="M10 39l1.500-4.500 2.500 2.500z" fill="#555"/></svg></div>
<div class="abs dk" style="left:1254px;top:1260px;width:48.5px;height:48.5px;border-radius:11px;background:linear-gradient(180deg,#3fb0f8,#1c5fe0);"><svg class="abs" style="left:0;top:0;" width="48.5" height="48.5" viewBox="0 0 48 48"><path d="M27 10 13.800 33M11.800 36.800l-1 1.800M21 10.500 37.500 38.800M8 30.500h17M33.500 30.500H40" fill="none" stroke="#fff" stroke-width="3.700" stroke-linecap="round"/></svg></div>
<div class="abs dk" style="left:1316.5px;top:1260px;width:48.5px;height:48.5px;border-radius:11px;background:linear-gradient(180deg,#b9b9bd,#8b8b90);"><svg class="abs" style="left:0;top:0;" width="48.5" height="48.5" viewBox="0 0 48 48"><circle cx="24" cy="24" r="20" fill="#77777b"/><rect x="23.200" y="2.600" width="1.600" height="4" fill="#5a5a5e" transform="rotate(0 24 24)"/><rect x="23.200" y="2.600" width="1.600" height="4" fill="#5a5a5e" transform="rotate(10 24 24)"/><rect x="23.200" y="2.600" width="1.600" height="4" fill="#5a5a5e" transform="rotate(20 24 24)"/><rect x="23.200" y="2.600" width="1.600" height="4" fill="#5a5a5e" transform="rotate(30 24 24)"/><rect x="23.200" y="2.600" width="1.600" height="4" fill="#5a5a5e" transform="rotate(40 24 24)"/><rect x="23.200" y="2.600" width="1.600" height="4" fill="#5a5a5e" transform="rotate(50 24 24)"/><rect x="23.200" y="2.600" width="1.600" height="4" fill="#5a5a5e" transform="rotate(60 24 24)"/><rect x="23.200" y="2.600" width="1.600" height="4" fill="#5a5a5e" transform="rotate(70 24 24)"/><rect x="23.200" y="2.600" width="1.600" height="4" fill="#5a5a5e" transform="rotate(80 24 24)"/><rect x="23.200" y="2.600" width="1.600" height="4" fill="#5a5a5e" transform="rotate(90 24 24)"/><rect x="23.200" y="2.600" width="1.600" height="4" fill="#5a5a5e" transform="rotate(100 24 24)"/><rect x="23.200" y="2.600" width="1.600" height="4" fill="#5a5a5e" transform="rotate(110 24 24)"/><rect x="23.200" y="2.600" width="1.600" height="4" fill="#5a5a5e" transform="rotate(120 24 24)"/><rect x="23.200" y="2.600" width="1.600" height="4" fill="#5a5a5e" transform="rotate(130 24 24)"/><rect x="23.200" y="2.600" width="1.600" height="4" fill="#5a5a5e" transform="rotate(140 24 24)"/><rect x="23.200" y="2.600" width="1.600" height="4" fill="#5a5a5e" transform="rotate(150 24 24)"/><rect x="23.200" y="2.600" width="1.600" height="4" fill="#5a5a5e" transform="rotate(160 24 24)"/><rect x="23.200" y="2.600" width="1.600" height="4" fill="#5a5a5e" transform="rotate(170 24 24)"/><rect x="23.200" y="2.600" width="1.600" height="4" fill="#5a5a5e" transform="rotate(180 24 24)"/><rect x="23.200" y="2.600" width="1.600" height="4" fill="#5a5a5e" transform="rotate(190 24 24)"/><rect x="23.200" y="2.600" width="1.600" height="4" fill="#5a5a5e" transform="rotate(200 24 24)"/><rect x="23.200" y="2.600" width="1.600" height="4" fill="#5a5a5e" transform="rotate(210 24 24)"/><rect x="23.200" y="2.600" width="1.600" height="4" fill="#5a5a5e" transform="rotate(220 24 24)"/><rect x="23.200" y="2.600" width="1.600" height="4" fill="#5a5a5e" transform="rotate(230 24 24)"/><rect x="23.200" y="2.600" width="1.600" height="4" fill="#5a5a5e" transform="rotate(240 24 24)"/><rect x="23.200" y="2.600" width="1.600" height="4" fill="#5a5a5e" transform="rotate(250 24 24)"/><rect x="23.200" y="2.600" width="1.600" height="4" fill="#5a5a5e" transform="rotate(260 24 24)"/><rect x="23.200" y="2.600" width="1.600" height="4" fill="#5a5a5e" transform="rotate(270 24 24)"/><rect x="23.200" y="2.600" width="1.600" height="4" fill="#5a5a5e" transform="rotate(280 24 24)"/><rect x="23.200" y="2.600" width="1.600" height="4" fill="#5a5a5e" transform="rotate(290 24 24)"/><rect x="23.200" y="2.600" width="1.600" height="4" fill="#5a5a5e" transform="rotate(300 24 24)"/><rect x="23.200" y="2.600" width="1.600" height="4" fill="#5a5a5e" transform="rotate(310 24 24)"/><rect x="23.200" y="2.600" width="1.600" height="4" fill="#5a5a5e" transform="rotate(320 24 24)"/><rect x="23.200" y="2.600" width="1.600" height="4" fill="#5a5a5e" transform="rotate(330 24 24)"/><rect x="23.200" y="2.600" width="1.600" height="4" fill="#5a5a5e" transform="rotate(340 24 24)"/><rect x="23.200" y="2.600" width="1.600" height="4" fill="#5a5a5e" transform="rotate(350 24 24)"/><circle cx="24" cy="24" r="16" fill="#9a9a9e"/><circle cx="24" cy="24" r="13" fill="none" stroke="#5e5e62" stroke-width="3.200"/><circle cx="24" cy="24" r="3.200" fill="#5e5e62"/><path d="M24 24V11M24 24l11.300 6.500M24 24 12.700 30.500" stroke="#5e5e62" stroke-width="3"/></svg></div>
<div class="abs" style="left:1348px;top:1254px;width:23px;height:23px;border-radius:50%;background:#ee4b3e;color:#fff;font-size:13.500px;line-height:23px;text-align:center;font-weight:500">1</div>
<div class="abs dk" style="left:1379px;top:1260px;width:48.5px;height:48.5px;border-radius:11px;background:linear-gradient(180deg,#d2d2d4,#b4b4b6);"><svg class="abs" style="left:0;top:0;" width="48.5" height="48.5" viewBox="0 0 48 48"><rect x="14.500" y="3.500" width="19.500" height="41" rx="4.500" fill="#1a1d22"/><rect x="16" y="5" width="16.500" height="38" rx="3.200" fill="#f2c9bf"/><path d="M32.500 14v25.800a3.200 3.200 0 0 1-3.200 3.200H19.200A3.200 3.200 0 0 1 16 39.800V34C24 30 30 22 32.500 14z" fill="#1d5c8a"/><path d="M32.500 8v10c-3 8-9 14-16.500 17.500V30C24 26 29 18 30 5h-.7a3.200 3.200 0 0 1 3.200 3z" fill="#e8584a" opacity=".9"/><rect x="21.500" y="6.500" width="5.500" height="2" rx="1" fill="#1a1d22"/></svg></div>
<div class="abs" style="left:1449px;top:1259px;width:1.300px;height:55px;background:rgba(255,255,255,.32)"></div>
<svg class="abs" style="left:1467px;top:1256px" width="54" height="57" viewBox="0 0 54 57"><path d="M27 2.500c7 3.500 15 5 24 5 0 22-4 38-24 47.500C7 45.500 3 29.500 3 7.500c9 0 17-1.500 24-5z" fill="#2f6fd0" stroke="#f2f5fa" stroke-width="3.200" stroke-linejoin="round"/><path d="M27 7c6 3 12.500 4.200 19.500 4.500-.3 19-4 31-19.500 39z" fill="#245bb5" opacity=".55"/><g fill="#fff"><rect x="13.500" y="17" width="7.500" height="5.500" rx="1.600"/><rect x="23" y="17" width="8" height="5.500" rx=".8"/><rect x="33" y="17" width="7.500" height="5.500" rx="1.600"/><rect x="13.500" y="24.500" width="7.500" height="6" rx=".8"/><rect x="33" y="24.500" width="7.500" height="6" rx=".8"/><rect x="13.500" y="32.500" width="7.500" height="5.500" rx="1.600"/><rect x="23" y="32.500" width="8" height="5.500" rx=".8"/><rect x="33" y="32.500" width="7.500" height="5.500" rx="1.600"/></g></svg>
<div class="abs" style="left:1464.500px;top:1296px;width:11px;height:11px;border-radius:50%;background:#b8b8b8;box-shadow:inset 0 0 0 1px #8a8a8a"></div><svg class="abs" style="left:1467px;top:1298px" width="6" height="7" viewBox="0 0 6 7"><rect x=".5" y="3" width="5" height="3.500" rx=".6" fill="#555"/><path d="M1.500 3V2a1.500 1.500 0 0 1 3 0v1" fill="none" stroke="#555" stroke-width=".9"/></svg>
<div class="abs dk" style="left:1532.5px;top:1260px;width:48.5px;height:48.5px;border-radius:11px;background:linear-gradient(180deg,#57575b,#3c3c40);overflow:visible"><svg class="abs" style="left:0;top:0;" width="48.5" height="48.5" viewBox="0 0 48 48"><rect x="17" y="-2.500" width="14" height="5" rx="2.500" fill="#2e2e31"/><circle cx="13.500" cy="20.500" r="5" fill="#232326"/><circle cx="34.500" cy="20.500" r="5" fill="#232326"/><circle cx="13.500" cy="20.500" r="3.200" fill="none" stroke="#c06ae0" stroke-width="1.200"/><path d="M13.500 17.300a3.200 3.200 0 0 1 3.200 3.200" fill="none" stroke="#4ad0b0" stroke-width="1.200"/><circle cx="34.500" cy="20.500" r="3.200" fill="none" stroke="#4ad08a" stroke-width="1.200"/><path d="M34.500 17.300a3.200 3.200 0 0 1 3.200 3.200" fill="none" stroke="#e0a04a" stroke-width="1.200"/><rect x="8" y="30.500" width="32" height="12" rx="6" fill="#1e1e21"/><rect x="11.5" y="35.5" width="1.100" height="2" fill="#e04a8a"/><rect x="13.45" y="34.5" width="1.100" height="4" fill="#c05ae0"/><rect x="15.4" y="33.5" width="1.100" height="6" fill="#7a6af0"/><rect x="17.35" y="32.0" width="1.100" height="9" fill="#4a9af0"/><rect x="19.3" y="34.0" width="1.100" height="5" fill="#4ad0b0"/><rect x="21.25" y="31.5" width="1.100" height="10" fill="#7ae04a"/><rect x="23.2" y="33.0" width="1.100" height="7" fill="#e0d04a"/><rect x="25.15" y="32.0" width="1.100" height="9" fill="#f09a4a"/><rect x="27.1" y="34.5" width="1.100" height="4" fill="#e04a6a"/><rect x="29.05" y="33.5" width="1.100" height="6" fill="#c05ae0"/><rect x="31.0" y="32.5" width="1.100" height="8" fill="#4a9af0"/><rect x="32.95" y="35.0" width="1.100" height="3" fill="#4ad0b0"/><rect x="34.9" y="35.5" width="1.100" height="2" fill="#e0d04a"/></svg></div>
<div class="abs" style="left:1530.500px;top:1277px;width:3px;height:12px;border-radius:1.500px;background:#3a3a3e"></div><div class="abs" style="left:1580.500px;top:1277px;width:3px;height:12px;border-radius:1.500px;background:#3a3a3e"></div>
<svg class="abs" style="left:1595px;top:1259px" width="49" height="50" viewBox="0 0 49 50"><defs><linearGradient id="dwg" x1="0" y1="0" x2="0" y2="1"><stop offset="0" stop-color="#c98af5"/><stop offset="1" stop-color="#a66aec"/></linearGradient></defs><path d="M1 1.500c4 1.500 8 2.200 12 2.200h23c4 0 8-.7 12-2.200V40c0 5-4 9-9 9H10c-5 0-9-4-9-9z" fill="url(#dwg)"/><path d="M13 3.700h23l-3 4.800H16z" fill="#8a4fd0" opacity=".75"/><path d="M19 16h11v11.500h7.500L24.500 40 11.500 27.500H19z" fill="#4a3a78"/></svg>
<div class="abs dk" style="left:1658px;top:1260px;width:48.5px;height:48.5px;border-radius:11px;background:linear-gradient(180deg,#fafafa,#ececec);"><svg class="abs" style="left:0;top:0;" width="48.5" height="48.5" viewBox="0 0 48 48"><rect x="4" y="4" width="40" height="40" rx="7" fill="#a9c0e8"/><path d="M4 28c8-3 16-4 24-2 6 1 11 0 16-1v12a7 7 0 0 1-7 7H11a7 7 0 0 1-7-7z" fill="#2f5f9a"/><path d="M4 33c10-2 22 0 40-1v5a7 7 0 0 1-7 7H11a7 7 0 0 1-7-7z" fill="#d9d2c4"/><path d="M6 28c4-2.500 8-2.500 12-1l-2 3H6z" fill="#6a6a5a"/></svg></div>
<svg class="abs" style="left:1679px;top:1283px" width="29" height="28" viewBox="0 0 29 28"><path d="M6 9h17l4 15.500c.3 1.300-.5 2.500-2 2.500H4c-1.500 0-2.300-1.200-2-2.500z" fill="#eef1f4" fill-opacity=".92" stroke="#c9ccd0" stroke-width=".8"/><ellipse cx="14.500" cy="5.500" rx="10.500" ry="4.800" fill="#18181a"/><rect x="4" y="5.500" width="21" height="5" fill="#18181a"/><ellipse cx="14.500" cy="10.500" rx="10.500" ry="3.200" fill="#2a2a2d"/><path d="M7 20c3-2 5 1 8-1s4-1 7 0" fill="none" stroke="#8a8f96" stroke-width="1.100"/></svg>
<div class="abs dk" style="left:1721.5px;top:1260px;width:48.5px;height:48.5px;border-radius:11px;background:linear-gradient(180deg,#fbfbfb,#ebebeb);"><svg class="abs" style="left:0;top:0;" width="48.5" height="48.5" viewBox="0 0 48 48"><circle cx="24" cy="24" r="19.500" fill="#fff"/><path d="M24 4a20 20 0 0 1 17.320 10H24a10 10 0 0 0-8.660 5L6.680 14A20 20 0 0 1 24 4z" fill="#e33b2e"/><path d="M24 4a20 20 0 0 1 17.320 10H24a10 10 0 0 0-8.660 5L6.680 14A20 20 0 0 1 24 4z" fill="#f7c12c" transform="rotate(120 24 24)"/><path d="M24 4a20 20 0 0 1 17.320 10H24a10 10 0 0 0-8.660 5L6.680 14A20 20 0 0 1 24 4z" fill="#2e9e4b" transform="rotate(240 24 24)"/><circle cx="24" cy="24" r="9.300" fill="#fff"/><circle cx="24" cy="24" r="7.500" fill="#3b7ded"/></svg></div>
<div class="abs dk" style="left:1784px;top:1259px;width:50px;height:50px;border-radius:10px;background:linear-gradient(180deg,#5fd05a,#3fb83f);"><svg class="abs" style="left:0;top:0" width="50" height="50" viewBox="0 0 50 50"><ellipse cx="25" cy="22.500" rx="18" ry="14.800" fill="#fff"/><path d="M21 36c1 2 .5 4-.5 6 4-1.500 8-4 11-7z" fill="#fff"/><text x="25" y="27.500" text-anchor="middle" font-family="Liberation Sans,sans-serif" font-weight="700" font-size="11.500" fill="#45bd45" letter-spacing="-.2">LINE</text></svg></div>
<div class="abs" style="left:1854.500px;top:1259px;width:1.300px;height:55px;background:rgba(255,255,255,.3)"></div>
<div class="abs" style="left:1874.500px;top:1261.500px;width:50.500px;height:49.500px;background:#fdfdfd;box-shadow:0 0 0 1px #e6e6e6"><svg class="abs" style="left:0;top:0" width="50.500" height="49.500" viewBox="0 0 50 50"><g fill="#222"><rect x="16.20" y="5.00" width="1.60" height="1.60"/><rect x="17.80" y="5.00" width="1.60" height="1.60"/><rect x="21.00" y="5.00" width="1.60" height="1.60"/><rect x="24.20" y="5.00" width="1.60" height="1.60"/><rect x="25.80" y="5.00" width="1.60" height="1.60"/><rect x="29.00" y="5.00" width="1.60" height="1.60"/><rect x="30.60" y="5.00" width="1.60" height="1.60"/><rect x="32.20" y="5.00" width="1.60" height="1.60"/><rect x="16.20" y="6.60" width="1.60" height="1.60"/><rect x="17.80" y="6.60" width="1.60" height="1.60"/><rect x="21.00" y="6.60" width="1.60" height="1.60"/><rect x="22.60" y="6.60" width="1.60" height="1.60"/><rect x="29.00" y="6.60" width="1.60" height="1.60"/><rect x="32.20" y="6.60" width="1.60" height="1.60"/><rect x="17.80" y="8.20" width="1.60" height="1.60"/><rect x="19.40" y="8.20" width="1.60" height="1.60"/><rect x="21.00" y="8.20" width="1.60" height="1.60"/><rect x="22.60" y="8.20" width="1.60" height="1.60"/><rect x="25.80" y="8.20" width="1.60" height="1.60"/><rect x="30.60" y="8.20" width="1.60" height="1.60"/><rect x="16.20" y="9.80" width="1.60" height="1.60"/><rect x="17.80" y="9.80" width="1.60" height="1.60"/><rect x="19.40" y="9.80" width="1.60" height="1.60"/><rect x="22.60" y="9.80" width="1.60" height="1.60"/><rect x="24.20" y="9.80" width="1.60" height="1.60"/><rect x="27.40" y="9.80" width="1.60" height="1.60"/><rect x="29.00" y="9.80" width="1.60" height="1.60"/><rect x="16.20" y="11.40" width="1.60" height="1.60"/><rect x="24.20" y="11.40" width="1.60" height="1.60"/><rect x="27.40" y="11.40" width="1.60" height="1.60"/><rect x="29.00" y="11.40" width="1.60" height="1.60"/><rect x="32.20" y="11.40" width="1.60" height="1.60"/><rect x="17.80" y="13.00" width="1.60" height="1.60"/><rect x="25.80" y="13.00" width="1.60" height="1.60"/><rect x="32.20" y="13.00" width="1.60" height="1.60"/><rect x="19.40" y="14.60" width="1.60" height="1.60"/><rect x="22.60" y="14.60" width="1.60" height="1.60"/><rect x="30.60" y="14.60" width="1.60" height="1.60"/><rect x="32.20" y="14.60" width="1.60" height="1.60"/><rect x="6.60" y="16.20" width="1.60" height="1.60"/><rect x="8.20" y="16.20" width="1.60" height="1.60"/><rect x="9.80" y="16.20" width="1.60" height="1.60"/><rect x="11.40" y="16.20" width="1.60" height="1.60"/><rect x="13.00" y="16.20" width="1.60" height="1.60"/><rect x="16.20" y="16.20" width="1.60" height="1.60"/><rect x="17.80" y="16.20" width="1.60" height="1.60"/><rect x="19.40" y="16.20" width="1.60" height="1.60"/><rect x="22.60" y="16.20" width="1.60" height="1.60"/><rect x="24.20" y="16.20" width="1.60" height="1.60"/><rect x="32.20" y="16.20" width="1.60" height="1.60"/><rect x="33.80" y="16.20" width="1.60" height="1.60"/><rect x="35.40" y="16.20" width="1.60" height="1.60"/><rect x="40.20" y="16.20" width="1.60" height="1.60"/><rect x="41.80" y="16.20" width="1.60" height="1.60"/><rect x="43.40" y="16.20" width="1.60" height="1.60"/><rect x="5.00" y="17.80" width="1.60" height="1.60"/><rect x="9.80" y="17.80" width="1.60" height="1.60"/><rect x="11.40" y="17.80" width="1.60" height="1.60"/><rect x="13.00" y="17.80" width="1.60" height="1.60"/><rect x="14.60" y="17.80" width="1.60" height="1.60"/><rect x="25.80" y="17.80" width="1.60" height="1.60"/><rect x="33.80" y="17.80" width="1.60" height="1.60"/><rect x="35.40" y="17.80" width="1.60" height="1.60"/><rect x="37.00" y="17.80" width="1.60" height="1.60"/><rect x="40.20" y="17.80" width="1.60" height="1.60"/><rect x="41.80" y="17.80" width="1.60" height="1.60"/><rect x="43.40" y="17.80" width="1.60" height="1.60"/><rect x="5.00" y="19.40" width="1.60" height="1.60"/><rect x="6.60" y="19.40" width="1.60" height="1.60"/><rect x="8.20" y="19.40" width="1.60" height="1.60"/><rect x="9.80" y="19.40" width="1.60" height="1.60"/><rect x="11.40" y="19.40" width="1.60" height="1.60"/><rect x="13.00" y="19.40" width="1.60" height="1.60"/><rect x="14.60" y="19.40" width="1.60" height="1.60"/><rect x="16.20" y="19.40" width="1.60" height="1.60"/><rect x="21.00" y="19.40" width="1.60" height="1.60"/><rect x="22.60" y="19.40" width="1.60" height="1.60"/><rect x="24.20" y="19.40" width="1.60" height="1.60"/><rect x="25.80" y="19.40" width="1.60" height="1.60"/><rect x="27.40" y="19.40" width="1.60" height="1.60"/><rect x="32.20" y="19.40" width="1.60" height="1.60"/><rect x="35.40" y="19.40" width="1.60" height="1.60"/><rect x="37.00" y="19.40" width="1.60" height="1.60"/><rect x="38.60" y="19.40" width="1.60" height="1.60"/><rect x="40.20" y="19.40" width="1.60" height="1.60"/><rect x="43.40" y="19.40" width="1.60" height="1.60"/><rect x="5.00" y="21.00" width="1.60" height="1.60"/><rect x="9.80" y="21.00" width="1.60" height="1.60"/><rect x="13.00" y="21.00" width="1.60" height="1.60"/><rect x="21.00" y="21.00" width="1.60" height="1.60"/><rect x="22.60" y="21.00" width="1.60" height="1.60"/><rect x="24.20" y="21.00" width="1.60" height="1.60"/><rect x="30.60" y="21.00" width="1.60" height="1.60"/><rect x="32.20" y="21.00" width="1.60" height="1.60"/><rect x="43.40" y="21.00" width="1.60" height="1.60"/><rect x="6.60" y="22.60" width="1.60" height="1.60"/><rect x="8.20" y="22.60" width="1.60" height="1.60"/><rect x="9.80" y="22.60" width="1.60" height="1.60"/><rect x="11.40" y="22.60" width="1.60" height="1.60"/><rect x="13.00" y="22.60" width="1.60" height="1.60"/><rect x="17.80" y="22.60" width="1.60" height="1.60"/><rect x="24.20" y="22.60" width="1.60" height="1.60"/><rect x="25.80" y="22.60" width="1.60" height="1.60"/><rect x="27.40" y="22.60" width="1.60" height="1.60"/><rect x="29.00" y="22.60" width="1.60" height="1.60"/><rect x="30.60" y="22.60" width="1.60" height="1.60"/><rect x="37.00" y="22.60" width="1.60" height="1.60"/><rect x="41.80" y="22.60" width="1.60" height="1.60"/><rect x="9.80" y="24.20" width="1.60" height="1.60"/><rect x="11.40" y="24.20" width="1.60" height="1.60"/><rect x="14.60" y="24.20" width="1.60" height="1.60"/><rect x="19.40" y="24.20" width="1.60" height="1.60"/><rect x="21.00" y="24.20" width="1.60" height="1.60"/><rect x="25.80" y="24.20" width="1.60" height="1.60"/><rect x="27.40" y="24.20" width="1.60" height="1.60"/><rect x="29.00" y="24.20" width="1.60" height="1.60"/><rect x="33.80" y="24.20" width="1.60" height="1.60"/><rect x="40.20" y="24.20" width="1.60" height="1.60"/><rect x="43.40" y="24.20" width="1.60" height="1.60"/><rect x="5.00" y="25.80" width="1.60" height="1.60"/><rect x="13.00" y="25.80" width="1.60" height="1.60"/><rect x="17.80" y="25.80" width="1.60" height="1.60"/><rect x="19.40" y="25.80" width="1.60" height="1.60"/><rect x="21.00" y="25.80" width="1.60" height="1.60"/><rect x="22.60" y="25.80" width="1.60" height="1.60"/><rect x="25.80" y="25.80" width="1.60" height="1.60"/><rect x="27.40" y="25.80" width="1.60" height="1.60"/><rect x="29.00" y="25.80" width="1.60" height="1.60"/><rect x="32.20" y="25.80" width="1.60" height="1.60"/><rect x="33.80" y="25.80" width="1.60" height="1.60"/><rect x="38.60" y="25.80" width="1.60" height="1.60"/><rect x="6.60" y="27.40" width="1.60" height="1.60"/><rect x="8.20" y="27.40" width="1.60" height="1.60"/><rect x="9.80" y="27.40" width="1.60" height="1.60"/><rect x="11.40" y="27.40" width="1.60" height="1.60"/><rect x="14.60" y="27.40" width="1.60" height="1.60"/><rect x="16.20" y="27.40" width="1.60" height="1.60"/><rect x="21.00" y="27.40" width="1.60" height="1.60"/><rect x="27.40" y="27.40" width="1.60" height="1.60"/><rect x="30.60" y="27.40" width="1.60" height="1.60"/><rect x="32.20" y="27.40" width="1.60" height="1.60"/><rect x="41.80" y="27.40" width="1.60" height="1.60"/><rect x="9.80" y="29.00" width="1.60" height="1.60"/><rect x="13.00" y="29.00" width="1.60" height="1.60"/><rect x="21.00" y="29.00" width="1.60" height="1.60"/><rect x="27.40" y="29.00" width="1.60" height="1.60"/><rect x="29.00" y="29.00" width="1.60" height="1.60"/><rect x="30.60" y="29.00" width="1.60" height="1.60"/><rect x="32.20" y="29.00" width="1.60" height="1.60"/><rect x="33.80" y="29.00" width="1.60" height="1.60"/><rect x="35.40" y="29.00" width="1.60" height="1.60"/><rect x="41.80" y="29.00" width="1.60" height="1.60"/><rect x="6.60" y="30.60" width="1.60" height="1.60"/><rect x="11.40" y="30.60" width="1.60" height="1.60"/><rect x="14.60" y="30.60" width="1.60" height="1.60"/><rect x="21.00" y="30.60" width="1.60" height="1.60"/><rect x="22.60" y="30.60" width="1.60" height="1.60"/><rect x="25.80" y="30.60" width="1.60" height="1.60"/><rect x="27.40" y="30.60" width="1.60" height="1.60"/><rect x="29.00" y="30.60" width="1.60" height="1.60"/><rect x="32.20" y="30.60" width="1.60" height="1.60"/><rect x="35.40" y="30.60" width="1.60" height="1.60"/><rect x="37.00" y="30.60" width="1.60" height="1.60"/><rect x="38.60" y="30.60" width="1.60" height="1.60"/><rect x="43.40" y="30.60" width="1.60" height="1.60"/><rect x="9.80" y="32.20" width="1.60" height="1.60"/><rect x="11.40" y="32.20" width="1.60" height="1.60"/><rect x="13.00" y="32.20" width="1.60" height="1.60"/><rect x="16.20" y="32.20" width="1.60" height="1.60"/><rect x="17.80" y="32.20" width="1.60" height="1.60"/><rect x="19.40" y="32.20" width="1.60" height="1.60"/><rect x="24.20" y="32.20" width="1.60" height="1.60"/><rect x="25.80" y="32.20" width="1.60" height="1.60"/><rect x="32.20" y="32.20" width="1.60" height="1.60"/><rect x="33.80" y="32.20" width="1.60" height="1.60"/><rect x="37.00" y="32.20" width="1.60" height="1.60"/><rect x="38.60" y="32.20" width="1.60" height="1.60"/><rect x="16.20" y="33.80" width="1.60" height="1.60"/><rect x="19.40" y="33.80" width="1.60" height="1.60"/><rect x="22.60" y="33.80" width="1.60" height="1.60"/><rect x="24.20" y="33.80" width="1.60" height="1.60"/><rect x="29.00" y="33.80" width="1.60" height="1.60"/><rect x="30.60" y="33.80" width="1.60" height="1.60"/><rect x="33.80" y="33.80" width="1.60" height="1.60"/><rect x="35.40" y="33.80" width="1.60" height="1.60"/><rect x="37.00" y="33.80" width="1.60" height="1.60"/><rect x="38.60" y="33.80" width="1.60" height="1.60"/><rect x="40.20" y="33.80" width="1.60" height="1.60"/><rect x="41.80" y="33.80" width="1.60" height="1.60"/><rect x="43.40" y="33.80" width="1.60" height="1.60"/><rect x="17.80" y="35.40" width="1.60" height="1.60"/><rect x="21.00" y="35.40" width="1.60" height="1.60"/><rect x="22.60" y="35.40" width="1.60" height="1.60"/><rect x="24.20" y="35.40" width="1.60" height="1.60"/><rect x="25.80" y="35.40" width="1.60" height="1.60"/><rect x="27.40" y="35.40" width="1.60" height="1.60"/><rect x="32.20" y="35.40" width="1.60" height="1.60"/><rect x="33.80" y="35.40" width="1.60" height="1.60"/><rect x="37.00" y="35.40" width="1.60" height="1.60"/><rect x="40.20" y="35.40" width="1.60" height="1.60"/><rect x="16.20" y="37.00" width="1.60" height="1.60"/><rect x="22.60" y="37.00" width="1.60" height="1.60"/><rect x="29.00" y="37.00" width="1.60" height="1.60"/><rect x="30.60" y="37.00" width="1.60" height="1.60"/><rect x="32.20" y="37.00" width="1.60" height="1.60"/><rect x="33.80" y="37.00" width="1.60" height="1.60"/><rect x="35.40" y="37.00" width="1.60" height="1.60"/><rect x="38.60" y="37.00" width="1.60" height="1.60"/><rect x="40.20" y="37.00" width="1.60" height="1.60"/><rect x="41.80" y="37.00" width="1.60" height="1.60"/><rect x="19.40" y="38.60" width="1.60" height="1.60"/><rect x="21.00" y="38.60" width="1.60" height="1.60"/><rect x="22.60" y="38.60" width="1.60" height="1.60"/><rect x="24.20" y="38.60" width="1.60" height="1.60"/><rect x="25.80" y="38.60" width="1.60" height="1.60"/><rect x="27.40" y="38.60" width="1.60" height="1.60"/><rect x="29.00" y="38.60" width="1.60" height="1.60"/><rect x="35.40" y="38.60" width="1.60" height="1.60"/><rect x="38.60" y="38.60" width="1.60" height="1.60"/><rect x="40.20" y="38.60" width="1.60" height="1.60"/><rect x="41.80" y="38.60" width="1.60" height="1.60"/><rect x="43.40" y="38.60" width="1.60" height="1.60"/><rect x="16.20" y="40.20" width="1.60" height="1.60"/><rect x="19.40" y="40.20" width="1.60" height="1.60"/><rect x="22.60" y="40.20" width="1.60" height="1.60"/><rect x="24.20" y="40.20" width="1.60" height="1.60"/><rect x="25.80" y="40.20" width="1.60" height="1.60"/><rect x="27.40" y="40.20" width="1.60" height="1.60"/><rect x="29.00" y="40.20" width="1.60" height="1.60"/><rect x="30.60" y="40.20" width="1.60" height="1.60"/><rect x="32.20" y="40.20" width="1.60" height="1.60"/><rect x="33.80" y="40.20" width="1.60" height="1.60"/><rect x="16.20" y="41.80" width="1.60" height="1.60"/><rect x="17.80" y="41.80" width="1.60" height="1.60"/><rect x="21.00" y="41.80" width="1.60" height="1.60"/><rect x="25.80" y="41.80" width="1.60" height="1.60"/><rect x="35.40" y="41.80" width="1.60" height="1.60"/><rect x="22.60" y="43.40" width="1.60" height="1.60"/><rect x="24.20" y="43.40" width="1.60" height="1.60"/><rect x="25.80" y="43.40" width="1.60" height="1.60"/><rect x="27.40" y="43.40" width="1.60" height="1.60"/><rect x="29.00" y="43.40" width="1.60" height="1.60"/><rect x="40.20" y="43.40" width="1.60" height="1.60"/></g><rect x="5" y="5" width="11.20" height="11.20" fill="#111"/><rect x="6.60" y="6.60" width="8.00" height="8.00" fill="#fff"/><rect x="8.20" y="8.20" width="4.80" height="4.80" fill="#111"/><rect x="33.8" y="5" width="11.20" height="11.20" fill="#111"/><rect x="35.40" y="6.60" width="8.00" height="8.00" fill="#fff"/><rect x="37.00" y="8.20" width="4.80" height="4.80" fill="#111"/><rect x="5" y="33.8" width="11.20" height="11.20" fill="#111"/><rect x="6.60" y="35.40" width="8.00" height="8.00" fill="#fff"/><rect x="8.20" y="37.00" width="4.80" height="4.80" fill="#111"/><rect x="20.500" y="20.500" width="9" height="9" fill="#fff"/><path d="M22.500 27.500c1-3 2.500-4 4.500-4.500l-.5-1.500 2 .5" fill="none" stroke="#111" stroke-width="1.600"/></svg></div>
<svg class="abs" style="left:1939px;top:1257px" width="46" height="54" viewBox="0 0 46 54"><defs><linearGradient id="trg" x1="0" y1="0" x2="1" y2="0"><stop offset="0" stop-color="#8e9294" stop-opacity=".85"/><stop offset=".45" stop-color="#6e7274" stop-opacity=".8"/><stop offset="1" stop-color="#7e8284" stop-opacity=".85"/></linearGradient></defs><path d="M1.500 6.500h43L39 49c-.3 2.200-2 3.500-4 3.500H11c-2 0-3.700-1.300-4-3.500z" fill="url(#trg)"/><ellipse cx="23" cy="6.500" rx="21.500" ry="4.800" fill="#5a5e60" stroke="#a8acae" stroke-width="1.500"/></svg>
<div class="abs" style="left:83.0px;top:1315.500px;width:5px;height:5px;border-radius:50%;background:#d0d0d0"></div>
<div class="abs" style="left:774.0px;top:1315.500px;width:5px;height:5px;border-radius:50%;background:#d0d0d0"></div>
<div class="abs" style="left:1490.5px;top:1315.500px;width:5px;height:5px;border-radius:50%;background:#d0d0d0"></div>
<div class="abs" style="left:1554.0px;top:1315.500px;width:5px;height:5px;border-radius:50%;background:#d0d0d0"></div>
<div class="abs" style="left:1616.5px;top:1315.500px;width:5px;height:5px;border-radius:50%;background:#d0d0d0"></div>
<div class="abs" style="left:1679.0px;top:1315.500px;width:5px;height:5px;border-radius:50%;background:#d0d0d0"></div>
<div class="abs" style="left:1743.0px;top:1315.500px;width:5px;height:5px;border-radius:50%;background:#d0d0d0"></div>
<div class="abs" style="left:1806.0px;top:1315.500px;width:5px;height:5px;border-radius:50%;background:#d0d0d0"></div>

</body>
</html>
